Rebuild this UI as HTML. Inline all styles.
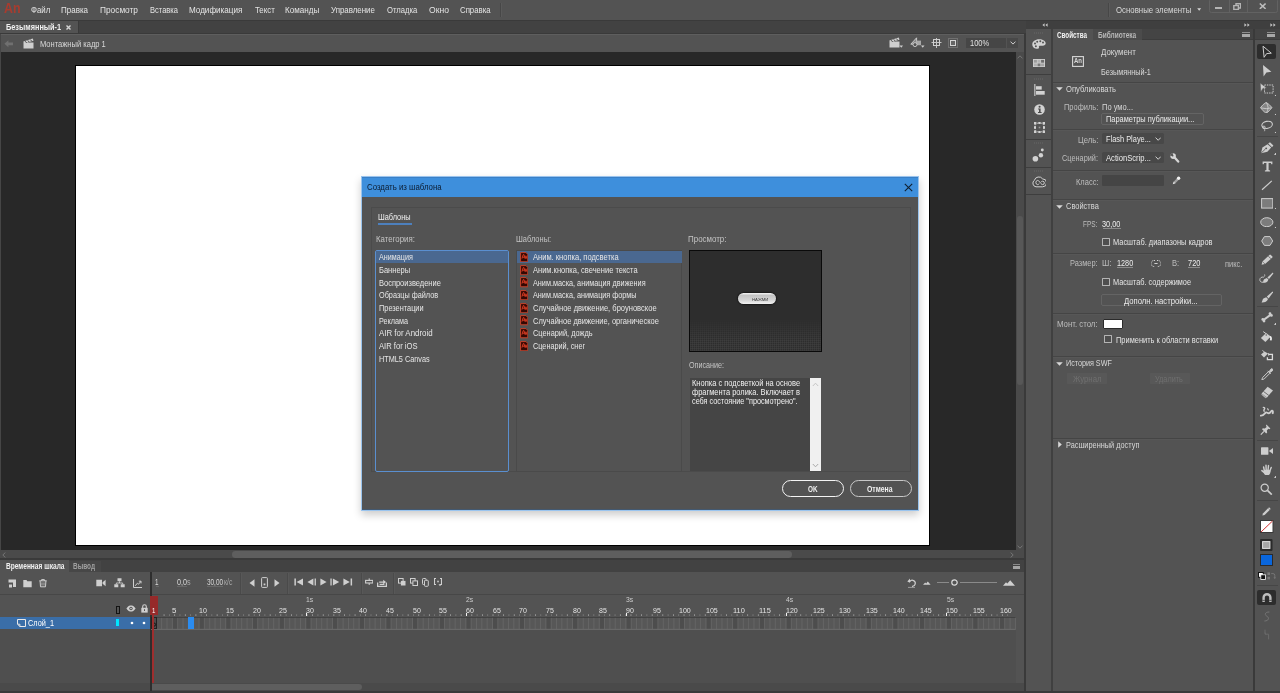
<!DOCTYPE html>
<html><head><meta charset="utf-8"><title>Adobe Animate</title><style>
html,body{margin:0;padding:0;}
body{width:1280px;height:693px;overflow:hidden;background:#535353;position:relative;font-family:"Liberation Sans",sans-serif;}
.r{position:absolute;box-sizing:border-box;display:block;}
.t{position:absolute;transform-origin:0 50%;white-space:nowrap;line-height:14px;height:14px;font-family:"Liberation Sans",sans-serif;}
</style></head><body>
<div class="r" style="left:0px;top:0px;width:1280px;height:20px;background:#535353;"></div>
<div class="t" style="left:4.1px;top:1.4px;color:#a83c2f;font-size:14.8px;font-weight:bold;transform:scaleX(0.8412);">An</div>
<div class="t" style="left:31.2px;top:3.0px;color:#e4e4e4;font-size:9px;transform:scaleX(0.8717);">Файл</div>
<div class="t" style="left:61.3px;top:3.0px;color:#e4e4e4;font-size:9px;transform:scaleX(0.8880);">Правка</div>
<div class="t" style="left:99.7px;top:3.0px;color:#e4e4e4;font-size:9px;transform:scaleX(0.9244);">Просмотр</div>
<div class="t" style="left:149.5px;top:3.0px;color:#e4e4e4;font-size:9px;transform:scaleX(0.8370);">Вставка</div>
<div class="t" style="left:189.3px;top:3.0px;color:#e4e4e4;font-size:9px;transform:scaleX(0.8984);">Модификация</div>
<div class="t" style="left:254.5px;top:3.0px;color:#e4e4e4;font-size:9px;transform:scaleX(0.8733);">Текст</div>
<div class="t" style="left:285.4px;top:3.0px;color:#e4e4e4;font-size:9px;transform:scaleX(0.8967);">Команды</div>
<div class="t" style="left:331.2px;top:3.0px;color:#e4e4e4;font-size:9px;transform:scaleX(0.8772);">Управление</div>
<div class="t" style="left:387.1px;top:3.0px;color:#e4e4e4;font-size:9px;transform:scaleX(0.8545);">Отладка</div>
<div class="t" style="left:429.1px;top:3.0px;color:#e4e4e4;font-size:9px;transform:scaleX(0.9512);">Окно</div>
<div class="t" style="left:459.7px;top:3.0px;color:#e4e4e4;font-size:9px;transform:scaleX(0.8665);">Справка</div>
<div class="r" style="left:500px;top:3px;width:1px;height:14px;background:#474747;"></div>
<div class="r" style="left:501px;top:3px;width:1px;height:14px;background:#5a5a5a;"></div>
<div class="r" style="left:1108px;top:3px;width:1px;height:14px;background:#474747;"></div>
<div class="r" style="left:1109px;top:3px;width:1px;height:14px;background:#5a5a5a;"></div>
<div class="t" style="left:1115.7px;top:2.5px;color:#d8d8d8;font-size:9px;transform:scaleX(0.8694);">Основные элементы</div>
<svg class="r" style="left:1197.2px;top:8.4px" width="4.4" height="3" viewBox="0 0 4.4 3"><path d="M0.2 0.3h4l-2 2.5z" fill="#d4d4d4"/></svg>
<div class="r" style="left:1209.3px;top:-2px;width:69px;height:14.6px;background:transparent;border:1px solid #626262;border-radius:2.5px;"></div>
<div class="r" style="left:1228.5px;top:0px;width:1px;height:12px;background:#626262;"></div>
<div class="r" style="left:1247px;top:0px;width:1px;height:12px;background:#626262;"></div>
<div class="r" style="left:1215px;top:7.1px;width:7.4px;height:2.3px;background:#b4b4b4;"></div>
<svg class="r" style="left:1233px;top:3px" width="8.4" height="7.2" viewBox="0 0 8.4 7.2"><path d="M3 0.8h4.6v4.2h-4.6z" fill="none" stroke="#b4b4b4" stroke-width="1.4"/><path d="M0.8 2.6h4.6v3.8h-4.6z" fill="#535353" stroke="#b4b4b4" stroke-width="1.4"/></svg>
<svg class="r" style="left:1258.5px;top:3px" width="7.4" height="6.4" viewBox="0 0 7.4 6.4"><path d="M0.8 0.5L6.6 5.9M6.6 0.5L0.8 5.9" stroke="#bcbcbc" stroke-width="1.5" fill="none"/></svg>
<div class="r" style="left:0px;top:20px;width:1280px;height:14px;background:#424242;"></div>
<div class="r" style="left:0px;top:20px;width:1280px;height:1px;background:#3a3a3a;"></div>
<div class="r" style="left:0px;top:33px;width:1280px;height:0.9px;background:#3a3a3a;"></div>
<div class="r" style="left:0px;top:21px;width:78px;height:12px;background:#535353;"></div>
<div class="r" style="left:78px;top:21px;width:0.8px;height:12px;background:#3a3a3a;"></div>
<div class="t" style="left:6.2px;top:20.0px;color:#f0f0f0;font-size:8.5px;font-weight:bold;transform:scaleX(0.8624);">Безымянный-1</div>
<svg class="r" style="left:66.2px;top:24.8px" width="5" height="5" viewBox="0 0 5 5"><path d="M0.5 0.5L4.5 4.5M4.5 0.5L0.5 4.5" stroke="#d4d4d4" stroke-width="1.4"/></svg>
<div class="r" style="left:0px;top:34px;width:1026px;height:18px;background:#535353;"></div>
<div class="r" style="left:0px;top:34px;width:1026px;height:1px;background:#5e5e5e;"></div>
<svg class="r" style="left:4.2px;top:40.2px" width="9.4" height="7.6" viewBox="0 0 9.4 7.6"><path d="M0.4 3.8L4.4 0.3V2.4H9V5.2H4.4V7.3z" fill="#707070"/></svg>
<svg class="r" style="left:22.8px;top:37.5px" width="11" height="11" viewBox="0 0 11 11"><path d="M0.5 4.5h10v6h-10z" fill="#d0d0d0"/><path d="M0.3 3.6L9.8 0.6l0.7 2.2L1 5.6z" fill="#d0d0d0"/><path d="M2.2 3.2l1.5 1.8M4.8 2.4l1.5 1.8M7.4 1.6l1.5 1.8" stroke="#535353" stroke-width="1"/></svg>
<div class="t" style="left:39.7px;top:36.7px;color:#d8d8d8;font-size:9px;transform:scaleX(0.8382);">Монтажный кадр 1</div>
<svg class="r" style="left:888.8px;top:36.6px" width="14" height="11" viewBox="0 0 14 11"><path d="M0.5 4.5h10v6h-10z" fill="#cfcfcf"/><path d="M0.3 3.6L9.8 0.6l0.7 2.2L1 5.6z" fill="#cfcfcf"/><path d="M2.2 3.2l1.5 1.8M4.8 2.4l1.5 1.8M7.4 1.6l1.5 1.8" stroke="#535353" stroke-width="1"/><path d="M10.5 8.5h3.5l-1.75 2.2z" fill="#cfcfcf"/></svg>
<svg class="r" style="left:910px;top:37.2px" width="15" height="11" viewBox="0 0 15 11"><path d="M0.8 7.2L6.6 0.8V7.2z" fill="#8a8a8a" stroke="#cfcfcf" stroke-width="0.9"/><rect x="6.4" y="3.6" width="4.6" height="4.6" fill="#a8a8a8"/><circle cx="5" cy="7.6" r="2" fill="#535353" stroke="#cfcfcf" stroke-width="0.9"/><path d="M11 8.5h3.5l-1.75 2.2z" fill="#cfcfcf"/></svg>
<svg class="r" style="left:931px;top:38px" width="11" height="10" viewBox="0 0 11 10"><path d="M5.5 0v10M0.5 4.5h10" stroke="#c4c4c4" stroke-width="1"/><rect x="2.5" y="1.5" width="6" height="6" fill="none" stroke="#d0d0d0" stroke-width="1"/></svg>
<svg class="r" style="left:948px;top:38px" width="10" height="10" viewBox="0 0 10 10"><rect x="0.5" y="0.5" width="9" height="9" fill="none" stroke="#8e8e8e" stroke-width="1" stroke-dasharray="1 1"/><rect x="2.5" y="2.5" width="5" height="5" fill="#666" stroke="#d4d4d4" stroke-width="1"/></svg>
<div class="r" style="left:966px;top:37.6px;width:40px;height:10.4px;background:#464646;"></div>
<div class="r" style="left:1007px;top:37.6px;width:10.5px;height:10.4px;background:#484848;"></div>
<div class="t" style="left:970.1px;top:36.2px;color:#e0e0e0;font-size:8.5px;transform:scaleX(0.8828);">100%</div>
<svg class="r" style="left:1009.6px;top:41.4px" width="6" height="4" viewBox="0 0 6 4"><path d="M0.5 0.6L3 3.1L5.5 0.6" fill="none" stroke="#d0d0d0" stroke-width="1"/></svg>
<div class="r" style="left:0px;top:52px;width:1016px;height:498px;background:#282828;"></div>
<div class="r" style="left:0px;top:34px;width:1px;height:516px;background:#464646;"></div>
<div class="r" style="left:75px;top:65px;width:855px;height:481px;background:#000000;"></div>
<div class="r" style="left:76px;top:66px;width:853px;height:479px;background:#ffffff;"></div>
<div class="r" style="left:1016px;top:52px;width:8px;height:498px;background:#4a4a4a;"></div>
<svg class="r" style="left:1017.2px;top:54.6px" width="6" height="4" viewBox="0 0 6 4"><path d="M0.5 3.4L3 0.8L5.5 3.4" fill="none" stroke="#7a7a7a" stroke-width="0.9"/></svg>
<svg class="r" style="left:1017.2px;top:544.6px" width="6" height="4" viewBox="0 0 6 4"><path d="M0.5 0.6L3 3.2L5.5 0.6" fill="none" stroke="#7a7a7a" stroke-width="0.9"/></svg>
<div class="r" style="left:1017px;top:216px;width:6px;height:169px;background:#575757;border-radius:3px;"></div>
<div class="r" style="left:1024px;top:34px;width:2px;height:659px;background:#3a3a3a;"></div>
<div class="r" style="left:0px;top:550px;width:1024px;height:8.5px;background:#4a4a4a;"></div>
<svg class="r" style="left:2.4px;top:551.6px" width="4" height="6" viewBox="0 0 4 6"><path d="M3.4 0.5L0.8 3L3.4 5.5" fill="none" stroke="#7a7a7a" stroke-width="0.9"/></svg>
<svg class="r" style="left:1010.4px;top:551.6px" width="4" height="6" viewBox="0 0 4 6"><path d="M0.6 0.5L3.2 3L0.6 5.5" fill="none" stroke="#7a7a7a" stroke-width="0.9"/></svg>
<div class="r" style="left:232px;top:551px;width:560px;height:6.8px;background:#5e5e5e;border-radius:3.4px;"></div>
<div class="r" style="left:0px;top:558.4px;width:1024px;height:1.6px;background:#3a3a3a;"></div>
<div class="r" style="left:0px;top:560px;width:1024px;height:11.5px;background:#424242;"></div>
<div class="r" style="left:0px;top:560px;width:68.5px;height:12px;background:#535353;"></div>
<div class="t" style="left:5.5px;top:559.3px;color:#f0f0f0;font-size:8.5px;font-weight:bold;transform:scaleX(0.7750);">Временная шкала</div>
<div class="r" style="left:69px;top:560.5px;width:31.5px;height:11.5px;background:#474747;"></div>
<div class="t" style="left:73.1px;top:559.3px;color:#a0a0a0;font-size:8.5px;font-weight:bold;transform:scaleX(0.7586);">Вывод</div>
<div class="r" style="left:1013px;top:563.8px;width:7px;height:1.2px;background:#8a8a8a;"></div>
<div class="r" style="left:1013px;top:566px;width:7px;height:3px;background:#a4a4a4;"></div>
<div class="r" style="left:0px;top:572px;width:1024px;height:23px;background:#535353;"></div>
<div class="r" style="left:0px;top:593.8px;width:1024px;height:1px;background:#474747;"></div>
<svg class="r" style="left:8px;top:579px" width="9" height="9" viewBox="0 0 9 9"><path d="M0.5 0.5h7.5v7.5h-3v-4.5h-4.5z" fill="#cfcfcf"/><path d="M1 5.5h3v3h-3z" fill="#cfcfcf"/></svg>
<svg class="r" style="left:23px;top:579px" width="9" height="9" viewBox="0 0 9 9"><path d="M0.3 1h3.2l0.8 1.2h4.4v6h-8.4z" fill="#cfcfcf"/></svg>
<svg class="r" style="left:39px;top:579px" width="8" height="8.5" viewBox="0 0 8 8.5"><path d="M0.3 1.8h7.4M2.6 1.8V0.6h2.8V1.8M1.1 2l0.4 5.8h5l0.4-5.8" fill="none" stroke="#cfcfcf" stroke-width="1"/><path d="M3 3.4v3.2M5 3.4v3.2" stroke="#cfcfcf" stroke-width="0.8"/></svg>
<svg class="r" style="left:96px;top:579px" width="10" height="8" viewBox="0 0 10 8"><path d="M0.3 0.8h5.7v6.4h-5.7z M6.6 3.2L9.6 0.8v6.4L6.6 4.8z" fill="#cfcfcf"/></svg>
<svg class="r" style="left:114px;top:578px" width="11" height="10" viewBox="0 0 11 10"><path d="M3.5 0.3h4v3h-4z M0.3 6.3h4v3h-4z M6.7 6.3h4v3h-4z" fill="#cfcfcf"/><path d="M5.5 3.3v1.7M2.3 6.3V5h6.4v1.3" fill="none" stroke="#cfcfcf" stroke-width="0.9"/></svg>
<svg class="r" style="left:133px;top:579px" width="9" height="9" viewBox="0 0 9 9"><path d="M0.5 0v8.5H9" fill="none" stroke="#cfcfcf" stroke-width="1"/><path d="M2.2 6.8L4.4 4.2L5.6 5.2L7.8 2.4M8 2.2h-2.2M8 2.2v2.2" fill="none" stroke="#cfcfcf" stroke-width="1"/></svg>
<div class="r" style="left:150.3px;top:572px;width:1.7px;height:121px;background:#2e2e2e;"></div>
<div class="t" style="left:155.3px;top:574.5px;color:#d8d8d8;font-size:8.5px;transform:scaleX(0.7393);">1</div>
<div class="r" style="left:155.5px;top:585.6px;width:3px;height:0.7px;background:#686868;"></div>
<div class="t" style="left:176.6px;top:574.5px;color:#d8d8d8;font-size:8.5px;transform:scaleX(0.8454);">0,0</div>
<div class="t" style="left:187.3px;top:574.6px;color:#a8a8a8;font-size:8.5px;transform:scaleX(0.8471);">s</div>
<div class="r" style="left:177px;top:585.6px;width:9.5px;height:0.7px;background:#686868;"></div>
<div class="t" style="left:206.6px;top:574.5px;color:#d8d8d8;font-size:8.5px;transform:scaleX(0.7518);">30,00</div>
<div class="t" style="left:223.5px;top:574.6px;color:#a8a8a8;font-size:8.5px;transform:scaleX(0.8024);">к/с</div>
<div class="r" style="left:207px;top:585.6px;width:15.5px;height:0.7px;background:#686868;"></div>
<div class="r" style="left:239.5px;top:573px;width:1px;height:20.5px;background:#4a4a4a;"></div>
<div class="r" style="left:240.5px;top:573px;width:1px;height:20.5px;background:#585858;"></div>
<div class="r" style="left:286.5px;top:573px;width:1px;height:20.5px;background:#4a4a4a;"></div>
<div class="r" style="left:287.5px;top:573px;width:1px;height:20.5px;background:#585858;"></div>
<div class="r" style="left:360.5px;top:573px;width:1px;height:20.5px;background:#4a4a4a;"></div>
<div class="r" style="left:361.5px;top:573px;width:1px;height:20.5px;background:#585858;"></div>
<div class="r" style="left:393px;top:573px;width:1px;height:20.5px;background:#4a4a4a;"></div>
<div class="r" style="left:394px;top:573px;width:1px;height:20.5px;background:#585858;"></div>
<svg class="r" style="left:249px;top:578.5px" width="6" height="8" viewBox="0 0 6 8"><path d="M5.5 0.3v7.4L0.5 4z" fill="#cfcfcf"/></svg>
<svg class="r" style="left:260.5px;top:577px" width="7" height="11" viewBox="0 0 7 11"><rect x="0.6" y="0.6" width="5.8" height="9.8" rx="0.8" fill="none" stroke="#cfcfcf" stroke-width="1"/><rect x="2.6" y="6.5" width="1.8" height="1.8" fill="#cfcfcf"/></svg>
<svg class="r" style="left:273.5px;top:578.5px" width="6" height="8" viewBox="0 0 6 8"><path d="M0.5 0.3v7.4L5.5 4z" fill="#cfcfcf"/></svg>
<svg class="r" style="left:294px;top:578px" width="10" height="8" viewBox="0 0 10 8"><path d="M0.4 0.4h1.5v7.2h-1.5z M9 0.4v7.2L2.6 4z" fill="#cfcfcf"/></svg>
<svg class="r" style="left:306.5px;top:578px" width="10" height="8" viewBox="0 0 10 8"><path d="M7.6 0.4h1.3v7.2h-1.3z M6.4 0.4v7.2L0.4 4z" fill="#cfcfcf"/></svg>
<svg class="r" style="left:319.5px;top:578px" width="7" height="8" viewBox="0 0 7 8"><path d="M0.4 0.4v7.2L6.6 4z" fill="#cfcfcf"/></svg>
<svg class="r" style="left:330px;top:578px" width="10" height="8" viewBox="0 0 10 8"><path d="M0.4 0.4h1.3v7.2h-1.3z M2.9 0.4v7.2L9.2 4z" fill="#cfcfcf"/></svg>
<svg class="r" style="left:342.5px;top:578px" width="10" height="8" viewBox="0 0 10 8"><path d="M7.6 0.4h1.5v7.2h-1.5z M0.4 0.4v7.2L6.8 4z" fill="#cfcfcf"/></svg>
<svg class="r" style="left:365px;top:577.8px" width="8.4" height="7.4" viewBox="0 0 8.4 7.4"><path d="M4.2 0.4v6.6" stroke="#cfcfcf" stroke-width="1"/><rect x="0.6" y="2.4" width="7.2" height="2.6" fill="#535353" stroke="#cfcfcf" stroke-width="1.1"/></svg>
<svg class="r" style="left:376.5px;top:578.5px" width="10" height="8" viewBox="0 0 10 8"><path d="M0.6 3.4v4h8.8v-4M2.6 5.4h4.8" fill="none" stroke="#cfcfcf" stroke-width="1.3"/><path d="M2.2 3.5V2.6h4V0.8l2.8 2.3-2.8 2.3V3.8H2.2z" fill="#cfcfcf"/></svg>
<svg class="r" style="left:398px;top:578px" width="8" height="8" viewBox="0 0 8 8"><rect x="0.5" y="0.5" width="4.6" height="4.6" fill="none" stroke="#cfcfcf" stroke-width="1"/><rect x="2.9" y="2.9" width="4.6" height="4.6" fill="#cfcfcf"/></svg>
<svg class="r" style="left:410px;top:578px" width="8" height="8" viewBox="0 0 8 8"><rect x="0.5" y="0.5" width="4.6" height="4.6" fill="none" stroke="#cfcfcf" stroke-width="1"/><rect x="2.9" y="2.9" width="4.6" height="4.6" fill="#535353" stroke="#cfcfcf" stroke-width="1"/></svg>
<svg class="r" style="left:422px;top:578px" width="7" height="9" viewBox="0 0 7 9"><rect x="0.5" y="0.5" width="3.6" height="6" rx="0.8" fill="none" stroke="#cfcfcf" stroke-width="1"/><rect x="2.5" y="2.3" width="3.8" height="6" rx="0.8" fill="#535353" stroke="#cfcfcf" stroke-width="1"/></svg>
<svg class="r" style="left:433.5px;top:578px" width="8" height="9" viewBox="0 0 8 9"><path d="M2 0.5H0.5V6.5H2M6 0.5H7.5V6.5H6" fill="none" stroke="#cfcfcf" stroke-width="1.1"/><rect x="3.2" y="2.7" width="1.6" height="1.6" fill="#cfcfcf"/><path d="M4.5 6.2h3l-1.5 2z" fill="#cfcfcf"/></svg>
<svg class="r" style="left:906.5px;top:577.5px" width="10" height="10" viewBox="0 0 10 10"><path d="M2.8 3.6A3 3 0 1 1 5 8.3" fill="none" stroke="#cfcfcf" stroke-width="1.2"/><path d="M0.3 3.4L3 0.6v4.2z" fill="#cfcfcf"/><path d="M1 9.4h7" stroke="#9a9a9a" stroke-width="1"/></svg>
<svg class="r" style="left:922.5px;top:581px" width="8" height="4" viewBox="0 0 8 4"><path d="M0 3.7L2.2 1.6L3.2 2.5L4.8 0.4L7.6 3.7z" fill="#cfcfcf"/></svg>
<div class="r" style="left:937px;top:582px;width:11.5px;height:1px;background:#8a8a8a;"></div>
<div class="r" style="left:959.5px;top:582px;width:37px;height:1px;background:#8a8a8a;"></div>
<svg class="r" style="left:950.5px;top:579px" width="7" height="7" viewBox="0 0 7 7"><circle cx="3.5" cy="3.5" r="2.7" fill="#535353" stroke="#dcdcdc" stroke-width="1.2"/></svg>
<svg class="r" style="left:1002.5px;top:579.5px" width="13" height="6" viewBox="0 0 13 6"><path d="M0 5.7L3 2.2L4.3 3.6L7.2 0.3L12 5.7z" fill="#cfcfcf"/></svg>
<div class="r" style="left:0px;top:595px;width:150px;height:22px;background:#535353;"></div>
<div class="r" style="left:152px;top:595px;width:872px;height:22px;background:#535353;"></div>
<svg class="r" style="left:116px;top:605.5px" width="4" height="8" viewBox="0 0 4 8"><rect x="0.5" y="0.5" width="3" height="7" fill="none" stroke="#141414" stroke-width="1"/></svg>
<svg class="r" style="left:126px;top:604.5px" width="10" height="7" viewBox="0 0 10 7"><path d="M0.4 3.5C2 0.9 3.6 0.4 5 0.4S8 0.9 9.6 3.5C8 6.1 6.4 6.6 5 6.6S2 6.1 0.4 3.5z" fill="#cfcfcf"/><circle cx="5" cy="3.5" r="1.7" fill="#535353"/><circle cx="5" cy="3.5" r="0.8" fill="#cfcfcf"/></svg>
<svg class="r" style="left:140.5px;top:603.8px" width="7" height="9" viewBox="0 0 7 9"><path d="M1.7 4V2.6a1.8 1.8 0 0 1 3.6 0V4" fill="none" stroke="#cfcfcf" stroke-width="1.1"/><rect x="0.3" y="3.8" width="6.4" height="4.8" fill="#cfcfcf"/><rect x="3" y="5.2" width="1" height="1.8" fill="#535353"/></svg>
<div class="r" style="left:0px;top:617px;width:150px;height:12px;background:#3a6ea8;"></div>
<svg class="r" style="left:17px;top:619.3px" width="9" height="8" viewBox="0 0 9 8"><path d="M0.5 0.5h8v7h-5.6L0.5 5.2z" fill="none" stroke="#e8e8e8" stroke-width="1"/><path d="M0.5 5.2h2.4v2.3" fill="none" stroke="#e8e8e8" stroke-width="0.9"/></svg>
<div class="t" style="left:28.3px;top:616.2px;color:#ffffff;font-size:9px;transform:scaleX(0.8149);">Слой_1</div>
<div class="r" style="left:115.8px;top:619px;width:3.6px;height:7.4px;background:#00e4ff;"></div>
<svg class="r" style="left:129.5px;top:621px" width="4" height="4" viewBox="0 0 4 4"><circle cx="2" cy="2" r="1.35" fill="#fff"/></svg>
<svg class="r" style="left:142px;top:621px" width="4" height="4" viewBox="0 0 4 4"><circle cx="2" cy="2" r="1.35" fill="#fff"/></svg>
<div class="r" style="left:0px;top:629px;width:150px;height:54px;background:#4f4f4f;"></div>
<div class="r" style="left:152px;top:629px;width:864px;height:54px;background:#4f4f4f;"></div>
<div class="r" style="left:1016px;top:595px;width:8px;height:98px;background:#535353;"></div>
<svg class="r" style="left:151.3px;top:616.8px" width="864.7" height="13" viewBox="0 0 864.7 13"><rect x="0" y="0" width="864.7" height="13" fill="#575757"/><rect x="-0.45" y="0" width="0.9" height="12" fill="#666666"/><rect x="4.89" y="0" width="0.9" height="12" fill="#666666"/><rect x="10.22" y="0" width="0.9" height="12" fill="#666666"/><rect x="15.56" y="0" width="0.9" height="12" fill="#666666"/><rect x="21.84" y="0" width="4.84" height="12" fill="#4d4d4d"/><rect x="20.89" y="0" width="0.9" height="12" fill="#666666"/><rect x="26.23" y="0" width="0.9" height="12" fill="#666666"/><rect x="31.57" y="0" width="0.9" height="12" fill="#666666"/><rect x="36.90" y="0" width="0.9" height="12" fill="#666666"/><rect x="42.24" y="0" width="0.9" height="12" fill="#666666"/><rect x="48.52" y="0" width="4.84" height="12" fill="#4d4d4d"/><rect x="47.57" y="0" width="0.9" height="12" fill="#666666"/><rect x="52.91" y="0" width="0.9" height="12" fill="#666666"/><rect x="58.25" y="0" width="0.9" height="12" fill="#666666"/><rect x="63.58" y="0" width="0.9" height="12" fill="#666666"/><rect x="68.92" y="0" width="0.9" height="12" fill="#666666"/><rect x="75.20" y="0" width="4.84" height="12" fill="#4d4d4d"/><rect x="74.25" y="0" width="0.9" height="12" fill="#666666"/><rect x="79.59" y="0" width="0.9" height="12" fill="#666666"/><rect x="84.93" y="0" width="0.9" height="12" fill="#666666"/><rect x="90.26" y="0" width="0.9" height="12" fill="#666666"/><rect x="95.60" y="0" width="0.9" height="12" fill="#666666"/><rect x="101.88" y="0" width="4.84" height="12" fill="#4d4d4d"/><rect x="100.93" y="0" width="0.9" height="12" fill="#666666"/><rect x="106.27" y="0" width="0.9" height="12" fill="#666666"/><rect x="111.61" y="0" width="0.9" height="12" fill="#666666"/><rect x="116.94" y="0" width="0.9" height="12" fill="#666666"/><rect x="122.28" y="0" width="0.9" height="12" fill="#666666"/><rect x="128.56" y="0" width="4.84" height="12" fill="#4d4d4d"/><rect x="127.61" y="0" width="0.9" height="12" fill="#666666"/><rect x="132.95" y="0" width="0.9" height="12" fill="#666666"/><rect x="138.29" y="0" width="0.9" height="12" fill="#666666"/><rect x="143.62" y="0" width="0.9" height="12" fill="#666666"/><rect x="148.96" y="0" width="0.9" height="12" fill="#666666"/><rect x="155.24" y="0" width="4.84" height="12" fill="#4d4d4d"/><rect x="154.29" y="0" width="0.9" height="12" fill="#666666"/><rect x="159.63" y="0" width="0.9" height="12" fill="#666666"/><rect x="164.97" y="0" width="0.9" height="12" fill="#666666"/><rect x="170.30" y="0" width="0.9" height="12" fill="#666666"/><rect x="175.64" y="0" width="0.9" height="12" fill="#666666"/><rect x="181.92" y="0" width="4.84" height="12" fill="#4d4d4d"/><rect x="180.97" y="0" width="0.9" height="12" fill="#666666"/><rect x="186.31" y="0" width="0.9" height="12" fill="#666666"/><rect x="191.65" y="0" width="0.9" height="12" fill="#666666"/><rect x="196.98" y="0" width="0.9" height="12" fill="#666666"/><rect x="202.32" y="0" width="0.9" height="12" fill="#666666"/><rect x="208.60" y="0" width="4.84" height="12" fill="#4d4d4d"/><rect x="207.65" y="0" width="0.9" height="12" fill="#666666"/><rect x="212.99" y="0" width="0.9" height="12" fill="#666666"/><rect x="218.33" y="0" width="0.9" height="12" fill="#666666"/><rect x="223.66" y="0" width="0.9" height="12" fill="#666666"/><rect x="229.00" y="0" width="0.9" height="12" fill="#666666"/><rect x="235.28" y="0" width="4.84" height="12" fill="#4d4d4d"/><rect x="234.33" y="0" width="0.9" height="12" fill="#666666"/><rect x="239.67" y="0" width="0.9" height="12" fill="#666666"/><rect x="245.01" y="0" width="0.9" height="12" fill="#666666"/><rect x="250.34" y="0" width="0.9" height="12" fill="#666666"/><rect x="255.68" y="0" width="0.9" height="12" fill="#666666"/><rect x="261.96" y="0" width="4.84" height="12" fill="#4d4d4d"/><rect x="261.01" y="0" width="0.9" height="12" fill="#666666"/><rect x="266.35" y="0" width="0.9" height="12" fill="#666666"/><rect x="271.69" y="0" width="0.9" height="12" fill="#666666"/><rect x="277.02" y="0" width="0.9" height="12" fill="#666666"/><rect x="282.36" y="0" width="0.9" height="12" fill="#666666"/><rect x="288.64" y="0" width="4.84" height="12" fill="#4d4d4d"/><rect x="287.69" y="0" width="0.9" height="12" fill="#666666"/><rect x="293.03" y="0" width="0.9" height="12" fill="#666666"/><rect x="298.37" y="0" width="0.9" height="12" fill="#666666"/><rect x="303.70" y="0" width="0.9" height="12" fill="#666666"/><rect x="309.04" y="0" width="0.9" height="12" fill="#666666"/><rect x="315.32" y="0" width="4.84" height="12" fill="#4d4d4d"/><rect x="314.37" y="0" width="0.9" height="12" fill="#666666"/><rect x="319.71" y="0" width="0.9" height="12" fill="#666666"/><rect x="325.05" y="0" width="0.9" height="12" fill="#666666"/><rect x="330.38" y="0" width="0.9" height="12" fill="#666666"/><rect x="335.72" y="0" width="0.9" height="12" fill="#666666"/><rect x="342.00" y="0" width="4.84" height="12" fill="#4d4d4d"/><rect x="341.05" y="0" width="0.9" height="12" fill="#666666"/><rect x="346.39" y="0" width="0.9" height="12" fill="#666666"/><rect x="351.73" y="0" width="0.9" height="12" fill="#666666"/><rect x="357.06" y="0" width="0.9" height="12" fill="#666666"/><rect x="362.40" y="0" width="0.9" height="12" fill="#666666"/><rect x="368.68" y="0" width="4.84" height="12" fill="#4d4d4d"/><rect x="367.73" y="0" width="0.9" height="12" fill="#666666"/><rect x="373.07" y="0" width="0.9" height="12" fill="#666666"/><rect x="378.41" y="0" width="0.9" height="12" fill="#666666"/><rect x="383.74" y="0" width="0.9" height="12" fill="#666666"/><rect x="389.08" y="0" width="0.9" height="12" fill="#666666"/><rect x="395.36" y="0" width="4.84" height="12" fill="#4d4d4d"/><rect x="394.41" y="0" width="0.9" height="12" fill="#666666"/><rect x="399.75" y="0" width="0.9" height="12" fill="#666666"/><rect x="405.09" y="0" width="0.9" height="12" fill="#666666"/><rect x="410.42" y="0" width="0.9" height="12" fill="#666666"/><rect x="415.76" y="0" width="0.9" height="12" fill="#666666"/><rect x="422.04" y="0" width="4.84" height="12" fill="#4d4d4d"/><rect x="421.09" y="0" width="0.9" height="12" fill="#666666"/><rect x="426.43" y="0" width="0.9" height="12" fill="#666666"/><rect x="431.77" y="0" width="0.9" height="12" fill="#666666"/><rect x="437.10" y="0" width="0.9" height="12" fill="#666666"/><rect x="442.44" y="0" width="0.9" height="12" fill="#666666"/><rect x="448.72" y="0" width="4.84" height="12" fill="#4d4d4d"/><rect x="447.77" y="0" width="0.9" height="12" fill="#666666"/><rect x="453.11" y="0" width="0.9" height="12" fill="#666666"/><rect x="458.45" y="0" width="0.9" height="12" fill="#666666"/><rect x="463.78" y="0" width="0.9" height="12" fill="#666666"/><rect x="469.12" y="0" width="0.9" height="12" fill="#666666"/><rect x="475.40" y="0" width="4.84" height="12" fill="#4d4d4d"/><rect x="474.45" y="0" width="0.9" height="12" fill="#666666"/><rect x="479.79" y="0" width="0.9" height="12" fill="#666666"/><rect x="485.13" y="0" width="0.9" height="12" fill="#666666"/><rect x="490.46" y="0" width="0.9" height="12" fill="#666666"/><rect x="495.80" y="0" width="0.9" height="12" fill="#666666"/><rect x="502.08" y="0" width="4.84" height="12" fill="#4d4d4d"/><rect x="501.13" y="0" width="0.9" height="12" fill="#666666"/><rect x="506.47" y="0" width="0.9" height="12" fill="#666666"/><rect x="511.81" y="0" width="0.9" height="12" fill="#666666"/><rect x="517.14" y="0" width="0.9" height="12" fill="#666666"/><rect x="522.48" y="0" width="0.9" height="12" fill="#666666"/><rect x="528.76" y="0" width="4.84" height="12" fill="#4d4d4d"/><rect x="527.81" y="0" width="0.9" height="12" fill="#666666"/><rect x="533.15" y="0" width="0.9" height="12" fill="#666666"/><rect x="538.49" y="0" width="0.9" height="12" fill="#666666"/><rect x="543.82" y="0" width="0.9" height="12" fill="#666666"/><rect x="549.16" y="0" width="0.9" height="12" fill="#666666"/><rect x="555.44" y="0" width="4.84" height="12" fill="#4d4d4d"/><rect x="554.49" y="0" width="0.9" height="12" fill="#666666"/><rect x="559.83" y="0" width="0.9" height="12" fill="#666666"/><rect x="565.17" y="0" width="0.9" height="12" fill="#666666"/><rect x="570.50" y="0" width="0.9" height="12" fill="#666666"/><rect x="575.84" y="0" width="0.9" height="12" fill="#666666"/><rect x="582.12" y="0" width="4.84" height="12" fill="#4d4d4d"/><rect x="581.17" y="0" width="0.9" height="12" fill="#666666"/><rect x="586.51" y="0" width="0.9" height="12" fill="#666666"/><rect x="591.85" y="0" width="0.9" height="12" fill="#666666"/><rect x="597.18" y="0" width="0.9" height="12" fill="#666666"/><rect x="602.52" y="0" width="0.9" height="12" fill="#666666"/><rect x="608.80" y="0" width="4.84" height="12" fill="#4d4d4d"/><rect x="607.85" y="0" width="0.9" height="12" fill="#666666"/><rect x="613.19" y="0" width="0.9" height="12" fill="#666666"/><rect x="618.53" y="0" width="0.9" height="12" fill="#666666"/><rect x="623.86" y="0" width="0.9" height="12" fill="#666666"/><rect x="629.20" y="0" width="0.9" height="12" fill="#666666"/><rect x="635.48" y="0" width="4.84" height="12" fill="#4d4d4d"/><rect x="634.53" y="0" width="0.9" height="12" fill="#666666"/><rect x="639.87" y="0" width="0.9" height="12" fill="#666666"/><rect x="645.21" y="0" width="0.9" height="12" fill="#666666"/><rect x="650.54" y="0" width="0.9" height="12" fill="#666666"/><rect x="655.88" y="0" width="0.9" height="12" fill="#666666"/><rect x="662.16" y="0" width="4.84" height="12" fill="#4d4d4d"/><rect x="661.21" y="0" width="0.9" height="12" fill="#666666"/><rect x="666.55" y="0" width="0.9" height="12" fill="#666666"/><rect x="671.89" y="0" width="0.9" height="12" fill="#666666"/><rect x="677.22" y="0" width="0.9" height="12" fill="#666666"/><rect x="682.56" y="0" width="0.9" height="12" fill="#666666"/><rect x="688.84" y="0" width="4.84" height="12" fill="#4d4d4d"/><rect x="687.89" y="0" width="0.9" height="12" fill="#666666"/><rect x="693.23" y="0" width="0.9" height="12" fill="#666666"/><rect x="698.57" y="0" width="0.9" height="12" fill="#666666"/><rect x="703.90" y="0" width="0.9" height="12" fill="#666666"/><rect x="709.24" y="0" width="0.9" height="12" fill="#666666"/><rect x="715.52" y="0" width="4.84" height="12" fill="#4d4d4d"/><rect x="714.57" y="0" width="0.9" height="12" fill="#666666"/><rect x="719.91" y="0" width="0.9" height="12" fill="#666666"/><rect x="725.25" y="0" width="0.9" height="12" fill="#666666"/><rect x="730.58" y="0" width="0.9" height="12" fill="#666666"/><rect x="735.92" y="0" width="0.9" height="12" fill="#666666"/><rect x="742.20" y="0" width="4.84" height="12" fill="#4d4d4d"/><rect x="741.25" y="0" width="0.9" height="12" fill="#666666"/><rect x="746.59" y="0" width="0.9" height="12" fill="#666666"/><rect x="751.93" y="0" width="0.9" height="12" fill="#666666"/><rect x="757.26" y="0" width="0.9" height="12" fill="#666666"/><rect x="762.60" y="0" width="0.9" height="12" fill="#666666"/><rect x="768.88" y="0" width="4.84" height="12" fill="#4d4d4d"/><rect x="767.93" y="0" width="0.9" height="12" fill="#666666"/><rect x="773.27" y="0" width="0.9" height="12" fill="#666666"/><rect x="778.61" y="0" width="0.9" height="12" fill="#666666"/><rect x="783.94" y="0" width="0.9" height="12" fill="#666666"/><rect x="789.28" y="0" width="0.9" height="12" fill="#666666"/><rect x="795.56" y="0" width="4.84" height="12" fill="#4d4d4d"/><rect x="794.61" y="0" width="0.9" height="12" fill="#666666"/><rect x="799.95" y="0" width="0.9" height="12" fill="#666666"/><rect x="805.29" y="0" width="0.9" height="12" fill="#666666"/><rect x="810.62" y="0" width="0.9" height="12" fill="#666666"/><rect x="815.96" y="0" width="0.9" height="12" fill="#666666"/><rect x="822.24" y="0" width="4.84" height="12" fill="#4d4d4d"/><rect x="821.29" y="0" width="0.9" height="12" fill="#666666"/><rect x="826.63" y="0" width="0.9" height="12" fill="#666666"/><rect x="831.97" y="0" width="0.9" height="12" fill="#666666"/><rect x="837.30" y="0" width="0.9" height="12" fill="#666666"/><rect x="842.64" y="0" width="0.9" height="12" fill="#666666"/><rect x="848.92" y="0" width="4.84" height="12" fill="#4d4d4d"/><rect x="847.97" y="0" width="0.9" height="12" fill="#666666"/><rect x="853.31" y="0" width="0.9" height="12" fill="#666666"/><rect x="858.65" y="0" width="0.9" height="12" fill="#666666"/><rect x="863.98" y="0" width="0.9" height="12" fill="#666666"/><rect x="0" y="0" width="864.7" height="0.8" fill="#3e3e3e"/><rect x="0" y="11.8" width="864.7" height="1.2" fill="#686868"/></svg>
<div class="r" style="left:188.252px;top:617.2px;width:6.136px;height:12px;background:#2b8cf0;"></div>
<svg class="r" style="left:151.3px;top:617px" width="6" height="12" viewBox="0 0 6 12"><rect x="0.5" y="0.5" width="5" height="11" fill="#4c4c4c" stroke="#222" stroke-width="1"/><circle cx="3" cy="7.6" r="1.6" fill="none" stroke="#111" stroke-width="0.9"/></svg>
<svg class="r" style="left:151.3px;top:613.6px" width="864.7" height="2.2" viewBox="0 0 864.7 2.2"><rect x="10.27" y="0.2" width="0.8" height="2" fill="#a2a2a2"/><rect x="15.61" y="0.2" width="0.8" height="2" fill="#7e7e7e"/><rect x="20.94" y="0.2" width="0.8" height="2" fill="#a2a2a2"/><rect x="26.28" y="0.2" width="0.8" height="2" fill="#7e7e7e"/><rect x="31.62" y="0.2" width="0.8" height="2" fill="#a2a2a2"/><rect x="36.95" y="0.2" width="0.8" height="2" fill="#7e7e7e"/><rect x="42.29" y="0.2" width="0.8" height="2" fill="#a2a2a2"/><rect x="47.62" y="0.2" width="0.8" height="2" fill="#7e7e7e"/><rect x="52.96" y="0.2" width="0.8" height="2" fill="#a2a2a2"/><rect x="58.30" y="0.2" width="0.8" height="2" fill="#7e7e7e"/><rect x="63.63" y="0.2" width="0.8" height="2" fill="#a2a2a2"/><rect x="68.97" y="0.2" width="0.8" height="2" fill="#7e7e7e"/><rect x="74.30" y="0.2" width="0.8" height="2" fill="#a2a2a2"/><rect x="79.64" y="0.2" width="0.8" height="2" fill="#7e7e7e"/><rect x="84.98" y="0.2" width="0.8" height="2" fill="#a2a2a2"/><rect x="90.31" y="0.2" width="0.8" height="2" fill="#7e7e7e"/><rect x="95.65" y="0.2" width="0.8" height="2" fill="#a2a2a2"/><rect x="100.98" y="0.2" width="0.8" height="2" fill="#7e7e7e"/><rect x="106.32" y="0.2" width="0.8" height="2" fill="#a2a2a2"/><rect x="111.66" y="0.2" width="0.8" height="2" fill="#7e7e7e"/><rect x="116.99" y="0.2" width="0.8" height="2" fill="#a2a2a2"/><rect x="122.33" y="0.2" width="0.8" height="2" fill="#7e7e7e"/><rect x="127.66" y="0.2" width="0.8" height="2" fill="#a2a2a2"/><rect x="133.00" y="0.2" width="0.8" height="2" fill="#7e7e7e"/><rect x="138.34" y="0.2" width="0.8" height="2" fill="#a2a2a2"/><rect x="143.67" y="0.2" width="0.8" height="2" fill="#7e7e7e"/><rect x="149.01" y="0.2" width="0.8" height="2" fill="#a2a2a2"/><rect x="154.34" y="0.2" width="0.8" height="2" fill="#7e7e7e"/><rect x="159.68" y="0.2" width="0.8" height="2" fill="#a2a2a2"/><rect x="165.02" y="0.2" width="0.8" height="2" fill="#7e7e7e"/><rect x="170.35" y="0.2" width="0.8" height="2" fill="#a2a2a2"/><rect x="175.69" y="0.2" width="0.8" height="2" fill="#7e7e7e"/><rect x="181.02" y="0.2" width="0.8" height="2" fill="#a2a2a2"/><rect x="186.36" y="0.2" width="0.8" height="2" fill="#7e7e7e"/><rect x="191.70" y="0.2" width="0.8" height="2" fill="#a2a2a2"/><rect x="197.03" y="0.2" width="0.8" height="2" fill="#7e7e7e"/><rect x="202.37" y="0.2" width="0.8" height="2" fill="#a2a2a2"/><rect x="207.70" y="0.2" width="0.8" height="2" fill="#7e7e7e"/><rect x="213.04" y="0.2" width="0.8" height="2" fill="#a2a2a2"/><rect x="218.38" y="0.2" width="0.8" height="2" fill="#7e7e7e"/><rect x="223.71" y="0.2" width="0.8" height="2" fill="#a2a2a2"/><rect x="229.05" y="0.2" width="0.8" height="2" fill="#7e7e7e"/><rect x="234.38" y="0.2" width="0.8" height="2" fill="#a2a2a2"/><rect x="239.72" y="0.2" width="0.8" height="2" fill="#7e7e7e"/><rect x="245.06" y="0.2" width="0.8" height="2" fill="#a2a2a2"/><rect x="250.39" y="0.2" width="0.8" height="2" fill="#7e7e7e"/><rect x="255.73" y="0.2" width="0.8" height="2" fill="#a2a2a2"/><rect x="261.06" y="0.2" width="0.8" height="2" fill="#7e7e7e"/><rect x="266.40" y="0.2" width="0.8" height="2" fill="#a2a2a2"/><rect x="271.74" y="0.2" width="0.8" height="2" fill="#7e7e7e"/><rect x="277.07" y="0.2" width="0.8" height="2" fill="#a2a2a2"/><rect x="282.41" y="0.2" width="0.8" height="2" fill="#7e7e7e"/><rect x="287.74" y="0.2" width="0.8" height="2" fill="#a2a2a2"/><rect x="293.08" y="0.2" width="0.8" height="2" fill="#7e7e7e"/><rect x="298.42" y="0.2" width="0.8" height="2" fill="#a2a2a2"/><rect x="303.75" y="0.2" width="0.8" height="2" fill="#7e7e7e"/><rect x="309.09" y="0.2" width="0.8" height="2" fill="#a2a2a2"/><rect x="314.42" y="0.2" width="0.8" height="2" fill="#7e7e7e"/><rect x="319.76" y="0.2" width="0.8" height="2" fill="#a2a2a2"/><rect x="325.10" y="0.2" width="0.8" height="2" fill="#7e7e7e"/><rect x="330.43" y="0.2" width="0.8" height="2" fill="#a2a2a2"/><rect x="335.77" y="0.2" width="0.8" height="2" fill="#7e7e7e"/><rect x="341.10" y="0.2" width="0.8" height="2" fill="#a2a2a2"/><rect x="346.44" y="0.2" width="0.8" height="2" fill="#7e7e7e"/><rect x="351.78" y="0.2" width="0.8" height="2" fill="#a2a2a2"/><rect x="357.11" y="0.2" width="0.8" height="2" fill="#7e7e7e"/><rect x="362.45" y="0.2" width="0.8" height="2" fill="#a2a2a2"/><rect x="367.78" y="0.2" width="0.8" height="2" fill="#7e7e7e"/><rect x="373.12" y="0.2" width="0.8" height="2" fill="#a2a2a2"/><rect x="378.46" y="0.2" width="0.8" height="2" fill="#7e7e7e"/><rect x="383.79" y="0.2" width="0.8" height="2" fill="#a2a2a2"/><rect x="389.13" y="0.2" width="0.8" height="2" fill="#7e7e7e"/><rect x="394.46" y="0.2" width="0.8" height="2" fill="#a2a2a2"/><rect x="399.80" y="0.2" width="0.8" height="2" fill="#7e7e7e"/><rect x="405.14" y="0.2" width="0.8" height="2" fill="#a2a2a2"/><rect x="410.47" y="0.2" width="0.8" height="2" fill="#7e7e7e"/><rect x="415.81" y="0.2" width="0.8" height="2" fill="#a2a2a2"/><rect x="421.14" y="0.2" width="0.8" height="2" fill="#7e7e7e"/><rect x="426.48" y="0.2" width="0.8" height="2" fill="#a2a2a2"/><rect x="431.82" y="0.2" width="0.8" height="2" fill="#7e7e7e"/><rect x="437.15" y="0.2" width="0.8" height="2" fill="#a2a2a2"/><rect x="442.49" y="0.2" width="0.8" height="2" fill="#7e7e7e"/><rect x="447.82" y="0.2" width="0.8" height="2" fill="#a2a2a2"/><rect x="453.16" y="0.2" width="0.8" height="2" fill="#7e7e7e"/><rect x="458.50" y="0.2" width="0.8" height="2" fill="#a2a2a2"/><rect x="463.83" y="0.2" width="0.8" height="2" fill="#7e7e7e"/><rect x="469.17" y="0.2" width="0.8" height="2" fill="#a2a2a2"/><rect x="474.50" y="0.2" width="0.8" height="2" fill="#7e7e7e"/><rect x="479.84" y="0.2" width="0.8" height="2" fill="#a2a2a2"/><rect x="485.18" y="0.2" width="0.8" height="2" fill="#7e7e7e"/><rect x="490.51" y="0.2" width="0.8" height="2" fill="#a2a2a2"/><rect x="495.85" y="0.2" width="0.8" height="2" fill="#7e7e7e"/><rect x="501.18" y="0.2" width="0.8" height="2" fill="#a2a2a2"/><rect x="506.52" y="0.2" width="0.8" height="2" fill="#7e7e7e"/><rect x="511.86" y="0.2" width="0.8" height="2" fill="#a2a2a2"/><rect x="517.19" y="0.2" width="0.8" height="2" fill="#7e7e7e"/><rect x="522.53" y="0.2" width="0.8" height="2" fill="#a2a2a2"/><rect x="527.86" y="0.2" width="0.8" height="2" fill="#7e7e7e"/><rect x="533.20" y="0.2" width="0.8" height="2" fill="#a2a2a2"/><rect x="538.54" y="0.2" width="0.8" height="2" fill="#7e7e7e"/><rect x="543.87" y="0.2" width="0.8" height="2" fill="#a2a2a2"/><rect x="549.21" y="0.2" width="0.8" height="2" fill="#7e7e7e"/><rect x="554.54" y="0.2" width="0.8" height="2" fill="#a2a2a2"/><rect x="559.88" y="0.2" width="0.8" height="2" fill="#7e7e7e"/><rect x="565.22" y="0.2" width="0.8" height="2" fill="#a2a2a2"/><rect x="570.55" y="0.2" width="0.8" height="2" fill="#7e7e7e"/><rect x="575.89" y="0.2" width="0.8" height="2" fill="#a2a2a2"/><rect x="581.22" y="0.2" width="0.8" height="2" fill="#7e7e7e"/><rect x="586.56" y="0.2" width="0.8" height="2" fill="#a2a2a2"/><rect x="591.90" y="0.2" width="0.8" height="2" fill="#7e7e7e"/><rect x="597.23" y="0.2" width="0.8" height="2" fill="#a2a2a2"/><rect x="602.57" y="0.2" width="0.8" height="2" fill="#7e7e7e"/><rect x="607.90" y="0.2" width="0.8" height="2" fill="#a2a2a2"/><rect x="613.24" y="0.2" width="0.8" height="2" fill="#7e7e7e"/><rect x="618.58" y="0.2" width="0.8" height="2" fill="#a2a2a2"/><rect x="623.91" y="0.2" width="0.8" height="2" fill="#7e7e7e"/><rect x="629.25" y="0.2" width="0.8" height="2" fill="#a2a2a2"/><rect x="634.58" y="0.2" width="0.8" height="2" fill="#7e7e7e"/><rect x="639.92" y="0.2" width="0.8" height="2" fill="#a2a2a2"/><rect x="645.26" y="0.2" width="0.8" height="2" fill="#7e7e7e"/><rect x="650.59" y="0.2" width="0.8" height="2" fill="#a2a2a2"/><rect x="655.93" y="0.2" width="0.8" height="2" fill="#7e7e7e"/><rect x="661.26" y="0.2" width="0.8" height="2" fill="#a2a2a2"/><rect x="666.60" y="0.2" width="0.8" height="2" fill="#7e7e7e"/><rect x="671.94" y="0.2" width="0.8" height="2" fill="#a2a2a2"/><rect x="677.27" y="0.2" width="0.8" height="2" fill="#7e7e7e"/><rect x="682.61" y="0.2" width="0.8" height="2" fill="#a2a2a2"/><rect x="687.94" y="0.2" width="0.8" height="2" fill="#7e7e7e"/><rect x="693.28" y="0.2" width="0.8" height="2" fill="#a2a2a2"/><rect x="698.62" y="0.2" width="0.8" height="2" fill="#7e7e7e"/><rect x="703.95" y="0.2" width="0.8" height="2" fill="#a2a2a2"/><rect x="709.29" y="0.2" width="0.8" height="2" fill="#7e7e7e"/><rect x="714.62" y="0.2" width="0.8" height="2" fill="#a2a2a2"/><rect x="719.96" y="0.2" width="0.8" height="2" fill="#7e7e7e"/><rect x="725.30" y="0.2" width="0.8" height="2" fill="#a2a2a2"/><rect x="730.63" y="0.2" width="0.8" height="2" fill="#7e7e7e"/><rect x="735.97" y="0.2" width="0.8" height="2" fill="#a2a2a2"/><rect x="741.30" y="0.2" width="0.8" height="2" fill="#7e7e7e"/><rect x="746.64" y="0.2" width="0.8" height="2" fill="#a2a2a2"/><rect x="751.98" y="0.2" width="0.8" height="2" fill="#7e7e7e"/><rect x="757.31" y="0.2" width="0.8" height="2" fill="#a2a2a2"/><rect x="762.65" y="0.2" width="0.8" height="2" fill="#7e7e7e"/><rect x="767.98" y="0.2" width="0.8" height="2" fill="#a2a2a2"/><rect x="773.32" y="0.2" width="0.8" height="2" fill="#7e7e7e"/><rect x="778.66" y="0.2" width="0.8" height="2" fill="#a2a2a2"/><rect x="783.99" y="0.2" width="0.8" height="2" fill="#7e7e7e"/><rect x="789.33" y="0.2" width="0.8" height="2" fill="#a2a2a2"/><rect x="794.66" y="0.2" width="0.8" height="2" fill="#7e7e7e"/><rect x="800.00" y="0.2" width="0.8" height="2" fill="#a2a2a2"/><rect x="805.34" y="0.2" width="0.8" height="2" fill="#7e7e7e"/><rect x="810.67" y="0.2" width="0.8" height="2" fill="#a2a2a2"/><rect x="816.01" y="0.2" width="0.8" height="2" fill="#7e7e7e"/><rect x="821.34" y="0.2" width="0.8" height="2" fill="#a2a2a2"/><rect x="826.68" y="0.2" width="0.8" height="2" fill="#7e7e7e"/><rect x="832.02" y="0.2" width="0.8" height="2" fill="#a2a2a2"/><rect x="837.35" y="0.2" width="0.8" height="2" fill="#7e7e7e"/><rect x="842.69" y="0.2" width="0.8" height="2" fill="#a2a2a2"/><rect x="848.02" y="0.2" width="0.8" height="2" fill="#7e7e7e"/><rect x="853.36" y="0.2" width="0.8" height="2" fill="#a2a2a2"/><rect x="858.70" y="0.2" width="0.8" height="2" fill="#7e7e7e"/></svg>
<div class="t" style="left:172.4px;top:603.5px;color:#e4e4e4;font-size:8px;transform:scaleX(0.9881);">5</div>
<div class="t" style="left:199.1px;top:603.5px;color:#e4e4e4;font-size:8px;transform:scaleX(0.8758);">10</div>
<div class="t" style="left:225.8px;top:603.5px;color:#e4e4e4;font-size:8px;transform:scaleX(0.8758);">15</div>
<div class="t" style="left:252.5px;top:603.5px;color:#e4e4e4;font-size:8px;transform:scaleX(0.8758);">20</div>
<div class="t" style="left:279.2px;top:603.5px;color:#e4e4e4;font-size:8px;transform:scaleX(0.8758);">25</div>
<div class="t" style="left:305.8px;top:603.5px;color:#e4e4e4;font-size:8px;transform:scaleX(0.8758);">30</div>
<div class="t" style="left:332.5px;top:603.5px;color:#e4e4e4;font-size:8px;transform:scaleX(0.8758);">35</div>
<div class="t" style="left:359.2px;top:603.5px;color:#e4e4e4;font-size:8px;transform:scaleX(0.8758);">40</div>
<div class="t" style="left:385.9px;top:603.5px;color:#e4e4e4;font-size:8px;transform:scaleX(0.8758);">45</div>
<div class="t" style="left:412.6px;top:603.5px;color:#e4e4e4;font-size:8px;transform:scaleX(0.8758);">50</div>
<div class="t" style="left:439.2px;top:603.5px;color:#e4e4e4;font-size:8px;transform:scaleX(0.8758);">55</div>
<div class="t" style="left:465.9px;top:603.5px;color:#e4e4e4;font-size:8px;transform:scaleX(0.8758);">60</div>
<div class="t" style="left:492.6px;top:603.5px;color:#e4e4e4;font-size:8px;transform:scaleX(0.8758);">65</div>
<div class="t" style="left:519.3px;top:603.5px;color:#e4e4e4;font-size:8px;transform:scaleX(0.8758);">70</div>
<div class="t" style="left:546.0px;top:603.5px;color:#e4e4e4;font-size:8px;transform:scaleX(0.8758);">75</div>
<div class="t" style="left:572.6px;top:603.5px;color:#e4e4e4;font-size:8px;transform:scaleX(0.8758);">80</div>
<div class="t" style="left:599.3px;top:603.5px;color:#e4e4e4;font-size:8px;transform:scaleX(0.8758);">85</div>
<div class="t" style="left:626.0px;top:603.5px;color:#e4e4e4;font-size:8px;transform:scaleX(0.8758);">90</div>
<div class="t" style="left:652.7px;top:603.5px;color:#e4e4e4;font-size:8px;transform:scaleX(0.8758);">95</div>
<div class="t" style="left:679.4px;top:603.5px;color:#e4e4e4;font-size:8px;transform:scaleX(0.8833);">100</div>
<div class="t" style="left:706.0px;top:603.5px;color:#e4e4e4;font-size:8px;transform:scaleX(0.8833);">105</div>
<div class="t" style="left:732.7px;top:603.5px;color:#e4e4e4;font-size:8px;transform:scaleX(0.9244);">110</div>
<div class="t" style="left:759.4px;top:603.5px;color:#e4e4e4;font-size:8px;transform:scaleX(0.9244);">115</div>
<div class="t" style="left:786.1px;top:603.5px;color:#e4e4e4;font-size:8px;transform:scaleX(0.8833);">120</div>
<div class="t" style="left:812.8px;top:603.5px;color:#e4e4e4;font-size:8px;transform:scaleX(0.8833);">125</div>
<div class="t" style="left:839.4px;top:603.5px;color:#e4e4e4;font-size:8px;transform:scaleX(0.8833);">130</div>
<div class="t" style="left:866.1px;top:603.5px;color:#e4e4e4;font-size:8px;transform:scaleX(0.8833);">135</div>
<div class="t" style="left:892.8px;top:603.5px;color:#e4e4e4;font-size:8px;transform:scaleX(0.8833);">140</div>
<div class="t" style="left:919.5px;top:603.5px;color:#e4e4e4;font-size:8px;transform:scaleX(0.8833);">145</div>
<div class="t" style="left:946.2px;top:603.5px;color:#e4e4e4;font-size:8px;transform:scaleX(0.8833);">150</div>
<div class="t" style="left:972.8px;top:603.5px;color:#e4e4e4;font-size:8px;transform:scaleX(0.8833);">155</div>
<div class="t" style="left:999.5px;top:603.5px;color:#e4e4e4;font-size:8px;transform:scaleX(0.8833);">160</div>
<div class="t" style="left:306.1px;top:593.4px;color:#cfcfcf;font-size:8px;transform:scaleX(0.8518);">1s</div>
<div class="r" style="left:305.544px;top:613.2px;width:1.2px;height:2.8px;background:#f4f4f4;"></div>
<div class="t" style="left:466.2px;top:593.4px;color:#cfcfcf;font-size:8px;transform:scaleX(0.8518);">2s</div>
<div class="r" style="left:465.624px;top:613.2px;width:1.2px;height:2.8px;background:#f4f4f4;"></div>
<div class="t" style="left:626.3px;top:593.4px;color:#cfcfcf;font-size:8px;transform:scaleX(0.8518);">3s</div>
<div class="r" style="left:625.704px;top:613.2px;width:1.2px;height:2.8px;background:#f4f4f4;"></div>
<div class="t" style="left:786.4px;top:593.4px;color:#cfcfcf;font-size:8px;transform:scaleX(0.8518);">4s</div>
<div class="r" style="left:785.784px;top:613.2px;width:1.2px;height:2.8px;background:#f4f4f4;"></div>
<div class="t" style="left:946.5px;top:593.4px;color:#cfcfcf;font-size:8px;transform:scaleX(0.8518);">5s</div>
<div class="r" style="left:945.864px;top:613.2px;width:1.2px;height:2.8px;background:#f4f4f4;"></div>
<div class="r" style="left:150.2px;top:595.8px;width:7.6px;height:19.6px;background:#962a2a;"></div>
<div class="t" style="left:151.7px;top:603.5px;color:#ffffff;font-size:8px;transform:scaleX(0.7635);">1</div>
<div class="r" style="left:152.2px;top:615.4px;width:1.5px;height:68px;background:#9e2e2e;"></div>
<div class="r" style="left:0px;top:683px;width:150px;height:8px;background:#4a4a4a;"></div>
<div class="r" style="left:152px;top:683px;width:872px;height:8px;background:#4a4a4a;"></div>
<div class="r" style="left:152px;top:683.8px;width:210px;height:6.6px;background:#5e5e5e;border-radius:0 3.3px 3.3px 0;"></div>
<div class="r" style="left:0px;top:691px;width:1024px;height:2px;background:#3a3a3a;"></div>
<div class="r" style="left:1026px;top:20px;width:254px;height:8.5px;background:#3f3f3f;"></div>
<div class="r" style="left:1026px;top:20px;width:254px;height:1px;background:#393939;"></div>
<svg class="r" style="left:1041.5px;top:22.6px" width="6" height="4" viewBox="0 0 6 4"><path d="M2.6 0.2L0.4 2L2.6 3.8z M5.6 0.2L3.4 2L5.6 3.8z" fill="#c8c8c8"/></svg>
<svg class="r" style="left:1243.5px;top:22.6px" width="6" height="4" viewBox="0 0 6 4"><path d="M0.4 0.2L2.6 2L0.4 3.8z M3.4 0.2L5.6 2L3.4 3.8z" fill="#c8c8c8"/></svg>
<svg class="r" style="left:1270px;top:22.6px" width="6" height="4" viewBox="0 0 6 4"><path d="M0.4 0.2L2.6 2L0.4 3.8z M3.4 0.2L5.6 2L3.4 3.8z" fill="#c8c8c8"/></svg>
<div class="r" style="left:1026px;top:28.5px;width:25px;height:664.5px;background:#535353;"></div>
<div class="r" style="left:1026px;top:74px;width:25px;height:1px;background:#3e3e3e;"></div>
<div class="r" style="left:1026px;top:138.5px;width:25px;height:1px;background:#3e3e3e;"></div>
<div class="r" style="left:1026px;top:166.5px;width:25px;height:1px;background:#3e3e3e;"></div>
<div class="r" style="left:1026px;top:193.5px;width:25px;height:1px;background:#3e3e3e;"></div>
<svg class="r" style="left:1034px;top:31.5px" width="9" height="2" viewBox="0 0 9 2"><path d="M0 0.5h9M0 1.5h9" stroke="#626262" stroke-width="0.7" stroke-dasharray="1 1"/></svg>
<svg class="r" style="left:1034px;top:77.5px" width="9" height="2" viewBox="0 0 9 2"><path d="M0 0.5h9M0 1.5h9" stroke="#626262" stroke-width="0.7" stroke-dasharray="1 1"/></svg>
<svg class="r" style="left:1034px;top:142px" width="9" height="2" viewBox="0 0 9 2"><path d="M0 0.5h9M0 1.5h9" stroke="#626262" stroke-width="0.7" stroke-dasharray="1 1"/></svg>
<svg class="r" style="left:1034px;top:169.5px" width="9" height="2" viewBox="0 0 9 2"><path d="M0 0.5h9M0 1.5h9" stroke="#626262" stroke-width="0.7" stroke-dasharray="1 1"/></svg>
<div class="r" style="left:1050.6px;top:28.5px;width:2.4px;height:664.5px;background:#404040;"></div>
<div class="r" style="left:1053px;top:28.5px;width:200px;height:11.5px;background:#444444;"></div>
<div class="r" style="left:1053px;top:39.4px;width:200px;height:0.8px;background:#3c3c3c;"></div>
<div class="r" style="left:1053px;top:28.5px;width:39.5px;height:12px;background:#535353;"></div>
<div class="t" style="left:1057.3px;top:27.5px;color:#f4f4f4;font-size:8.5px;font-weight:bold;transform:scaleX(0.7425);">Свойства</div>
<div class="r" style="left:1093px;top:29px;width:48.5px;height:11px;background:#4b4b4b;"></div>
<div class="t" style="left:1097.5px;top:27.5px;color:#b8b8b8;font-size:8.5px;font-weight:bold;transform:scaleX(0.7662);">Библиотека</div>
<div class="r" style="left:1242px;top:31.8px;width:7.5px;height:1.2px;background:#8e8e8e;"></div>
<div class="r" style="left:1242px;top:34px;width:7.5px;height:3px;background:#a8a8a8;"></div>
<div class="r" style="left:1053px;top:40px;width:200px;height:651px;background:#535353;"></div>
<div class="r" style="left:1253px;top:28.5px;width:2px;height:664.5px;background:#3a3a3a;"></div>
<div class="r" style="left:1255px;top:28.5px;width:25px;height:11.5px;background:#444444;"></div>
<div class="r" style="left:1255px;top:39.4px;width:25px;height:0.8px;background:#3c3c3c;"></div>
<div class="r" style="left:1267px;top:31.8px;width:7.5px;height:1.2px;background:#8e8e8e;"></div>
<div class="r" style="left:1267px;top:34px;width:7.5px;height:3px;background:#a8a8a8;"></div>
<div class="r" style="left:1255px;top:40px;width:25px;height:651px;background:#535353;"></div>
<div class="r" style="left:1026px;top:691px;width:254px;height:2px;background:#3a3a3a;"></div>
<div class="t" style="left:1101.0px;top:44.8px;color:#d8d8d8;font-size:9px;transform:scaleX(0.8714);">Документ</div>
<svg class="r" style="left:1071.5px;top:55.5px" width="12" height="11" viewBox="0 0 12 11"><rect x="0.6" y="0.6" width="10.8" height="9.8" fill="none" stroke="#d8d8d8" stroke-width="1.1"/></svg>
<div class="t" style="left:1073.5px;top:54.0px;color:#d8d8d8;font-size:7px;font-weight:bold;transform:scaleX(0.8562);">An</div>
<div class="t" style="left:1101.2px;top:64.7px;color:#d8d8d8;font-size:9px;transform:scaleX(0.8073);">Безымянный-1</div>
<div class="r" style="left:1053px;top:81.9px;width:200px;height:1px;background:#454545;"></div>
<div class="r" style="left:1053px;top:82.9px;width:200px;height:1px;background:#575757;"></div>
<div class="r" style="left:1053px;top:128.8px;width:200px;height:1px;background:#454545;"></div>
<div class="r" style="left:1053px;top:129.8px;width:200px;height:1px;background:#575757;"></div>
<div class="r" style="left:1053px;top:169.9px;width:200px;height:1px;background:#454545;"></div>
<div class="r" style="left:1053px;top:170.9px;width:200px;height:1px;background:#575757;"></div>
<div class="r" style="left:1053px;top:198.7px;width:200px;height:1px;background:#454545;"></div>
<div class="r" style="left:1053px;top:199.7px;width:200px;height:1px;background:#575757;"></div>
<div class="r" style="left:1053px;top:252.7px;width:200px;height:1px;background:#454545;"></div>
<div class="r" style="left:1053px;top:253.7px;width:200px;height:1px;background:#575757;"></div>
<div class="r" style="left:1053px;top:312.5px;width:200px;height:1px;background:#454545;"></div>
<div class="r" style="left:1053px;top:313.5px;width:200px;height:1px;background:#575757;"></div>
<div class="r" style="left:1053px;top:355.7px;width:200px;height:1px;background:#454545;"></div>
<div class="r" style="left:1053px;top:356.7px;width:200px;height:1px;background:#575757;"></div>
<div class="r" style="left:1053px;top:437.9px;width:200px;height:1px;background:#454545;"></div>
<div class="r" style="left:1053px;top:438.9px;width:200px;height:1px;background:#575757;"></div>
<svg class="r" style="left:1055.5px;top:87.3px" width="7" height="4" viewBox="0 0 7 4"><path d="M0.2 0.2h6.6L3.5 3.8z" fill="#d8d8d8"/></svg>
<div class="t" style="left:1065.7px;top:82.0px;color:#d8d8d8;font-size:9px;transform:scaleX(0.8478);">Опубликовать</div>
<div class="t" style="left:1063.7px;top:100.0px;color:#bdbdbd;font-size:9px;transform:scaleX(0.8293);">Профиль:</div>
<div class="t" style="left:1101.5px;top:100.0px;color:#d8d8d8;font-size:9px;transform:scaleX(0.8361);">По умо...</div>
<div class="r" style="left:1101.3px;top:112.8px;width:102.5px;height:12px;background:#535353;border:1px solid #646464;border-radius:2px;"></div>
<div class="t" style="left:1106.4px;top:112.2px;color:#ececec;font-size:9px;transform:scaleX(0.8264);">Параметры публикации...</div>
<div class="t" style="left:1077.7px;top:133.0px;color:#bdbdbd;font-size:9px;transform:scaleX(0.8525);">Цель:</div>
<div class="r" style="left:1101.8px;top:133.4px;width:62.5px;height:10.8px;background:#484848;border-radius:1.5px;"></div>
<div class="t" style="left:1105.7px;top:132.0px;color:#ececec;font-size:9px;transform:scaleX(0.8234);">Flash Playe...</div>
<svg class="r" style="left:1155.1px;top:137px" width="6.4" height="4.2" viewBox="0 0 6.4 4.2"><path d="M0.6 0.6L3.2 3.3L5.8 0.6" fill="none" stroke="#d0d0d0" stroke-width="1"/></svg>
<div class="t" style="left:1061.7px;top:151.4px;color:#bdbdbd;font-size:9px;transform:scaleX(0.8162);">Сценарий:</div>
<div class="r" style="left:1101.8px;top:152px;width:62.5px;height:11px;background:#484848;border-radius:1.5px;"></div>
<div class="t" style="left:1105.7px;top:150.7px;color:#ececec;font-size:9px;transform:scaleX(0.8467);">ActionScrip...</div>
<svg class="r" style="left:1155.1px;top:155.7px" width="6.4" height="4.2" viewBox="0 0 6.4 4.2"><path d="M0.6 0.6L3.2 3.3L5.8 0.6" fill="none" stroke="#d0d0d0" stroke-width="1"/></svg>
<svg class="r" style="left:1170px;top:152.5px" width="10" height="10.5" viewBox="0 0 10 10.5"><circle cx="3.1" cy="3.1" r="2.8" fill="#d6d6d6"/><path d="M3.3 3.3L-0.3 2.4L2.4 -0.3z" fill="#535353"/><circle cx="2.5" cy="2.5" r="0.9" fill="#535353"/><path d="M4.6 4.6L8.2 8.6" stroke="#d6d6d6" stroke-width="2.3" stroke-linecap="round"/></svg>
<div class="t" style="left:1075.5px;top:175.0px;color:#bdbdbd;font-size:9px;transform:scaleX(0.8333);">Класс:</div>
<div class="r" style="left:1101.8px;top:175.4px;width:62.5px;height:10.8px;background:#454545;border-radius:1px;"></div>
<svg class="r" style="left:1171.5px;top:176px" width="9" height="9" viewBox="0 0 9 9"><path d="M5.6 3.4L2.6 6.4" stroke="#a2a2a2" stroke-width="2.2"/><circle cx="6.6" cy="2.3" r="1.7" fill="#f2f2f2"/><path d="M1.7 5.4L3.6 7.3L0.7 8.3z" fill="#e6e6e6"/></svg>
<svg class="r" style="left:1055.5px;top:204.6px" width="7" height="4" viewBox="0 0 7 4"><path d="M0.2 0.2h6.6L3.5 3.8z" fill="#d8d8d8"/></svg>
<div class="t" style="left:1065.7px;top:199.3px;color:#d8d8d8;font-size:9px;transform:scaleX(0.8297);">Свойства</div>
<div class="t" style="left:1083.4px;top:216.9px;color:#bdbdbd;font-size:9px;transform:scaleX(0.7194);">FPS:</div>
<div class="t" style="left:1102.3px;top:216.9px;color:#ececec;font-size:9px;transform:scaleX(0.8166);">30,00</div>
<div class="r" style="left:1102.5px;top:228.2px;width:18px;height:0.8px;background:#8a8a8a;"></div>
<div class="r" style="left:1102px;top:238px;width:8px;height:8px;background:#4e4e4e;border:1px solid #b4b4b4;border-radius:0.5px;"></div>
<div class="t" style="left:1113.3px;top:235.0px;color:#e4e4e4;font-size:9px;transform:scaleX(0.8241);">Масштаб. диапазоны кадров</div>
<div class="t" style="left:1070.3px;top:256.4px;color:#bdbdbd;font-size:9px;transform:scaleX(0.8284);">Размер:</div>
<div class="t" style="left:1102.0px;top:256.4px;color:#bdbdbd;font-size:9px;transform:scaleX(0.8837);">Ш:</div>
<div class="t" style="left:1117.1px;top:256.2px;color:#ececec;font-size:9px;transform:scaleX(0.8087);">1280</div>
<div class="r" style="left:1117.3px;top:267px;width:16px;height:0.8px;background:#8a8a8a;"></div>
<svg class="r" style="left:1150.5px;top:258.5px" width="10" height="9" viewBox="0 0 10 9"><path d="M4 1.5H3a3 3 0 0 0 0 6H4M6 1.5H7a3 3 0 0 1 0 6H6" fill="none" stroke="#cfcfcf" stroke-width="1" stroke-dasharray="1.4 0.8"/><path d="M3.4 4.5h3.2" stroke="#cfcfcf" stroke-width="1"/></svg>
<div class="t" style="left:1172.2px;top:256.4px;color:#bdbdbd;font-size:9px;transform:scaleX(0.8455);">В:</div>
<div class="t" style="left:1187.9px;top:256.2px;color:#ececec;font-size:9px;transform:scaleX(0.8249);">720</div>
<div class="r" style="left:1188px;top:267px;width:12.2px;height:0.8px;background:#8a8a8a;"></div>
<div class="t" style="left:1225.4px;top:256.6px;color:#bdbdbd;font-size:9px;transform:scaleX(0.8257);">пикс.</div>
<div class="r" style="left:1102px;top:277.6px;width:8px;height:8px;background:#4e4e4e;border:1px solid #b4b4b4;border-radius:0.5px;"></div>
<div class="t" style="left:1113.3px;top:274.5px;color:#e4e4e4;font-size:9px;transform:scaleX(0.8173);">Масштаб. содержимое</div>
<div class="r" style="left:1101.3px;top:294.3px;width:120.6px;height:12px;background:#535353;border:1px solid #646464;border-radius:2px;"></div>
<div class="t" style="left:1124.2px;top:293.8px;color:#ececec;font-size:9px;transform:scaleX(0.8536);">Дополн. настройки...</div>
<div class="t" style="left:1057.4px;top:317.4px;color:#bdbdbd;font-size:9px;transform:scaleX(0.8679);">Монт. стол:</div>
<div class="r" style="left:1103.3px;top:318.5px;width:20px;height:10px;background:#ffffff;border:1px solid #2a2a2a;border-radius:1px;"></div>
<div class="r" style="left:1104px;top:335.4px;width:8px;height:8px;background:#4e4e4e;border:1px solid #b4b4b4;border-radius:0.5px;"></div>
<div class="t" style="left:1115.5px;top:332.6px;color:#e4e4e4;font-size:9px;transform:scaleX(0.8271);">Применить к области вставки</div>
<svg class="r" style="left:1055.5px;top:361.7px" width="7" height="4" viewBox="0 0 7 4"><path d="M0.2 0.2h6.6L3.5 3.8z" fill="#d8d8d8"/></svg>
<div class="t" style="left:1065.7px;top:356.4px;color:#d8d8d8;font-size:9px;transform:scaleX(0.7978);">История SWF</div>
<div class="r" style="left:1067.3px;top:373px;width:39.4px;height:11px;background:#585858;border-radius:1px;"></div>
<div class="t" style="left:1072.7px;top:371.7px;color:#6f6f6f;font-size:9px;transform:scaleX(0.8708);">Журнал</div>
<div class="r" style="left:1150.3px;top:373px;width:39.5px;height:11px;background:#585858;border-radius:1px;"></div>
<div class="t" style="left:1155.3px;top:371.7px;color:#6f6f6f;font-size:9px;transform:scaleX(0.8116);">Удалить</div>
<svg class="r" style="left:1057.8px;top:441px" width="4" height="7" viewBox="0 0 4 7"><path d="M0.2 0.2v6.6L3.8 3.5z" fill="#d8d8d8"/></svg>
<div class="t" style="left:1065.7px;top:437.5px;color:#d8d8d8;font-size:9px;transform:scaleX(0.8177);">Расширенный доступ</div>
<svg class="r" style="left:1032px;top:39px" width="14" height="10" viewBox="0 0 14 10"><path d="M7.2 0.3C3.2 0.3 0.3 2.6 0.3 5.4C0.3 8 2.6 9.7 5.6 9.7C7 9.7 7.2 8.9 6.9 8.2C6.6 7.4 7.2 6.8 8.2 6.8H10.6C12.6 6.8 13.7 5.7 13.7 4.3C13.7 2 10.8 0.3 7.2 0.3z" fill="#d2d2d2"/><circle cx="3" cy="4.6" r="1" fill="#535353"/><circle cx="5.2" cy="2.7" r="1" fill="#535353"/><circle cx="8.3" cy="2.3" r="1" fill="#535353"/><circle cx="11" cy="3.6" r="1" fill="#535353"/><circle cx="3.9" cy="7.2" r="1" fill="#535353"/></svg>
<svg class="r" style="left:1032.5px;top:58.8px" width="12" height="8.2" viewBox="0 0 12 8.2"><rect x="0" y="0" width="12" height="8.2" fill="#cfcfcf"/><rect x="0.9" y="0.9" width="3" height="2.8" fill="#9c9c9c"/><rect x="4.5" y="0.9" width="3" height="2.8" fill="#b4b4b4"/><rect x="8.1" y="0.9" width="3" height="2.8" fill="#6e6e6e"/><rect x="0.9" y="4.5" width="3" height="2.8" fill="#b0b0b0"/><rect x="4.5" y="4.5" width="3" height="2.8" fill="#787878"/><rect x="8.1" y="4.5" width="3" height="2.8" fill="#a4a4a4"/></svg>
<svg class="r" style="left:1033.5px;top:84px" width="11" height="12" viewBox="0 0 11 12"><rect x="0.3" y="0" width="1.1" height="12" fill="#d2d2d2"/><rect x="2" y="2.2" width="5.7" height="3.4" fill="#d2d2d2"/><rect x="2" y="7" width="8.7" height="3.7" fill="#d2d2d2"/></svg>
<svg class="r" style="left:1033.5px;top:103.7px" width="11" height="11" viewBox="0 0 11 11"><circle cx="5.5" cy="5.5" r="5.3" fill="#d2d2d2"/><circle cx="5.6" cy="2.7" r="1.05" fill="#4a4a4a"/><path d="M4.1 4.4h2.5v3.6h1v1H4v-1h1V5.4h-0.9z" fill="#4a4a4a"/></svg>
<svg class="r" style="left:1034px;top:122.2px" width="11" height="11" viewBox="0 0 11 11"><rect x="1.2" y="1.2" width="8.6" height="8.6" fill="none" stroke="#d2d2d2" stroke-width="0.9" stroke-dasharray="1 0.9"/><path d="M0 0h2.4v2.4h-2.4z M8.6 0h2.4v2.4h-2.4z M0 8.6h2.4v2.4h-2.4z M8.6 8.6h2.4v2.4h-2.4z M4.3 0h2.4v2h-2.4z M4.3 9h2.4v2h-2.4z M0 4.3h2v2.4h-2z M9 4.3h2v2.4h-2z" fill="#d2d2d2"/><rect x="4.7" y="4.7" width="1.6" height="1.6" fill="#9a9a9a"/></svg>
<svg class="r" style="left:1032px;top:147.5px" width="13" height="14" viewBox="0 0 13 14"><circle cx="3.4" cy="10.8" r="2.8" fill="#d2d2d2"/><circle cx="8.9" cy="7.2" r="2.2" fill="#d2d2d2"/><circle cx="10.3" cy="2" r="1.45" fill="#d2d2d2"/></svg>
<svg class="r" style="left:1032px;top:176.3px" width="14" height="11.5" viewBox="0 0 14 11.5"><path d="M4 10.8A3.6 3.6 0 0 1 2.4 4.3A4.6 4.6 0 0 1 10.6 2.9A3.9 3.9 0 0 1 10.6 10.8z" fill="#4a4a4a" stroke="#d2d2d2" stroke-width="1"/><path d="M5.4 8.6A2.2 2.2 0 0 1 5.4 4.4C6.4 4.4 7 5 7.6 5.8L9 7.6C9.5 8.2 10 8.6 10.6 8.6A1.7 1.7 0 0 0 10.6 5.2C10 5.2 9.6 5.4 9.2 5.8" fill="none" stroke="#d2d2d2" stroke-width="1"/><path d="M5.4 8.6C6.2 8.6 6.8 8.2 7.3 7.6" fill="none" stroke="#d2d2d2" stroke-width="1"/></svg>
<div class="r" style="left:1257px;top:135.5px;width:21px;height:1px;background:#464646;"></div>
<div class="r" style="left:1257px;top:306px;width:21px;height:1px;background:#464646;"></div>
<div class="r" style="left:1257px;top:439.5px;width:21px;height:1px;background:#464646;"></div>
<div class="r" style="left:1257px;top:500.2px;width:21px;height:1px;background:#464646;"></div>
<div class="r" style="left:1257px;top:584.8px;width:21px;height:1px;background:#464646;"></div>
<div class="r" style="left:1257px;top:43.8px;width:19.3px;height:15px;background:#2d2d2d;border-radius:2px;"></div>
<svg class="r" style="left:1257px;top:43px" width="20" height="16" viewBox="0 0 20 16"><path d="M6 3.2L14.3 10.2L9.6 10.6L7.1 14.3z" fill="#2d2d2d" stroke="#cdcdcd" stroke-width="1" stroke-linejoin="miter"/></svg>
<svg class="r" style="left:1257px;top:62px" width="20" height="16" viewBox="0 0 20 16"><path d="M6 3L14.4 9.7L9.4 10.4L6.6 14.4z" fill="#cdcdcd"/></svg>
<svg class="r" style="left:1257px;top:80px" width="20" height="17" viewBox="0 0 20 17"><rect x="7.5" y="5" width="8.6" height="8" fill="none" stroke="#cdcdcd" stroke-width="1" stroke-dasharray="1.4 1"/><path d="M3.2 3L9.6 7.9L5.9 8.4L3.8 12z" fill="#cdcdcd" stroke="#535353" stroke-width="0.5"/></svg>
<svg class="r" style="left:1273.8px;top:93.6px" width="2.7" height="2.7" viewBox="0 0 2.7 2.7"><path d="M2.7 0v2.7H0z" fill="#f4f4f4"/></svg>
<svg class="r" style="left:1260.4px;top:101.6px" width="12.4" height="11.8" viewBox="0 0 12.4 11.8"><path d="M6.2 0.4Q9.6 2.4 11.9 5.6Q9.6 9 6.2 11.4Q2.8 9 0.5 5.6Q2.8 2.4 6.2 0.4z" fill="#858585" stroke="#cdcdcd" stroke-width="0.9"/><path d="M0.7 5.8Q6.2 7.6 11.7 5.8" fill="none" stroke="#cdcdcd" stroke-width="0.9"/><path d="M6.2 0.5Q10 5.8 6.2 11.3" fill="none" stroke="#cdcdcd" stroke-width="0.9"/></svg>
<svg class="r" style="left:1273.8px;top:112.6px" width="2.7" height="2.7" viewBox="0 0 2.7 2.7"><path d="M2.7 0v2.7H0z" fill="#f4f4f4"/></svg>
<svg class="r" style="left:1259.5px;top:119px" width="14" height="13" viewBox="0 0 14 13"><ellipse cx="7.1" cy="5.8" rx="5.3" ry="3.5" transform="rotate(-12 7.1 5.8)" fill="none" stroke="#cdcdcd" stroke-width="1.1"/><circle cx="3.9" cy="8.4" r="1.3" fill="none" stroke="#cdcdcd" stroke-width="0.9"/><path d="M4.3 9.6C4.9 10.4 4.9 11.2 4.4 12.2" fill="none" stroke="#cdcdcd" stroke-width="0.9"/></svg>
<svg class="r" style="left:1273.8px;top:130.6px" width="2.7" height="2.7" viewBox="0 0 2.7 2.7"><path d="M2.7 0v2.7H0z" fill="#f4f4f4"/></svg>
<svg class="r" style="left:1260px;top:142px" width="14" height="12" viewBox="0 0 14 12"><path d="M1 11.2L2.4 5.6L7.6 2.2L11.2 5.6L7.4 9.8z" fill="#cdcdcd"/><path d="M8.2 1.4L10 0.2L13.4 3.6L12 5.2z" fill="#cdcdcd"/><path d="M1 11.2L5.6 6.8" stroke="#535353" stroke-width="0.8"/><circle cx="6.2" cy="6.3" r="0.9" fill="#535353"/></svg>
<svg class="r" style="left:1273.8px;top:152.1px" width="2.7" height="2.7" viewBox="0 0 2.7 2.7"><path d="M2.7 0v2.7H0z" fill="#f4f4f4"/></svg>
<svg class="r" style="left:1261.5px;top:160.5px" width="11" height="11" viewBox="0 0 11 11"><path d="M0.6 0.5h9.8v2.8h-1.1l-0.4-1.4H6.6v7.2l1.5 0.4v0.9H2.9v-0.9l1.5-0.4V1.9H2.1l-0.4 1.4H0.6z" fill="#cdcdcd"/></svg>
<svg class="r" style="left:1261px;top:179.5px" width="12" height="11" viewBox="0 0 12 11"><path d="M1 9.7L10.8 0.9" stroke="#cdcdcd" stroke-width="1.2"/></svg>
<svg class="r" style="left:1260.5px;top:197.8px" width="12.5" height="10.8" viewBox="0 0 12.5 10.8"><rect x="0.6" y="0.6" width="11.2" height="9.5" fill="#7c7c7c" stroke="#cdcdcd" stroke-width="1"/></svg>
<svg class="r" style="left:1273.8px;top:206.6px" width="2.7" height="2.7" viewBox="0 0 2.7 2.7"><path d="M2.7 0v2.7H0z" fill="#f4f4f4"/></svg>
<svg class="r" style="left:1260px;top:216.8px" width="14" height="10.5" viewBox="0 0 14 10.5"><ellipse cx="6.8" cy="5.2" rx="6.1" ry="4.5" fill="#7c7c7c" stroke="#cdcdcd" stroke-width="1"/></svg>
<svg class="r" style="left:1273.8px;top:225.6px" width="2.7" height="2.7" viewBox="0 0 2.7 2.7"><path d="M2.7 0v2.7H0z" fill="#f4f4f4"/></svg>
<svg class="r" style="left:1260.5px;top:235.5px" width="12.5" height="10" viewBox="0 0 12.5 10"><path d="M0.7 5L3.4 0.6H9L11.7 5L9 9.4H3.4z" fill="#7c7c7c" stroke="#cdcdcd" stroke-width="1"/></svg>
<svg class="r" style="left:1260.5px;top:254px" width="12.5" height="11.5" viewBox="0 0 12.5 11.5"><path d="M0.6 10.7L1.4 7.6L8.4 0.9a1 1 0 0 1 1.4 0l1.4 1.4a1 1 0 0 1 0 1.4L4 10z" fill="#cdcdcd"/><path d="M7.4 2.2l2.6 2.6" stroke="#535353" stroke-width="0.8"/><path d="M1.4 7.6L4 10" stroke="#535353" stroke-width="0.6"/></svg>
<svg class="r" style="left:1259px;top:272px" width="15" height="12" viewBox="0 0 15 12"><path d="M13.8 0.6L8.4 5.4l1.6 1.6L14.4 1.4z" fill="#cdcdcd"/><path d="M7.8 6L5.2 7.2C4.2 8 4.4 9.8 3.6 10.8C5.8 11 7.6 10.4 8.6 9.2L9.4 7.6z" fill="#cdcdcd"/><path d="M4.6 5.2C2.6 4.6 0.8 6 0.8 7.8C0.8 9.6 2.4 10.6 4 10.2" fill="none" stroke="#cdcdcd" stroke-width="0.9"/><path d="M4.6 5.2C5.6 4.4 6 3.4 5.6 2.4" fill="none" stroke="#cdcdcd" stroke-width="0.8"/></svg>
<svg class="r" style="left:1260.5px;top:290.5px" width="12.5" height="12" viewBox="0 0 12.5 12"><path d="M11.6 0.4L5.8 5.6l1.8 1.8L12.2 1.2z" fill="#cdcdcd"/><path d="M5.2 6.2L2.4 7.6C1.4 8.6 1.6 10.2 0.6 11.4C3 11.6 5.2 11 6.2 9.6L7 8z" fill="#cdcdcd"/></svg>
<svg class="r" style="left:1260.5px;top:312px" width="12.5" height="10.5" viewBox="0 0 12.5 10.5"><path d="M2.2 8.2L9.8 2.6" stroke="#cdcdcd" stroke-width="2"/><circle cx="1.8" cy="7.4" r="1.4" fill="#cdcdcd"/><circle cx="3" cy="9" r="1.4" fill="#cdcdcd"/><circle cx="9" cy="1.7" r="1.4" fill="#cdcdcd"/><circle cx="10.4" cy="3.4" r="1.4" fill="#cdcdcd"/></svg>
<svg class="r" style="left:1273.8px;top:322.1px" width="2.7" height="2.7" viewBox="0 0 2.7 2.7"><path d="M2.7 0v2.7H0z" fill="#f4f4f4"/></svg>
<svg class="r" style="left:1260px;top:330.5px" width="13.5" height="12" viewBox="0 0 13.5 12"><path d="M0.9 6.9L6.1 2L10.8 5.4L5.4 11.1z" fill="#cdcdcd"/><path d="M6 2.6L3.2 0.6" stroke="#cdcdcd" stroke-width="1"/><circle cx="6.2" cy="4" r="0.7" fill="#535353"/><path d="M10.4 4.9C12 5.4 12.2 7.4 11.6 9.4L9.8 9.2C10.4 7.8 10.2 6.6 9.6 6.2z" fill="#f0f0f0"/></svg>
<svg class="r" style="left:1259.5px;top:349px" width="14.5" height="12" viewBox="0 0 14.5 12"><path d="M1 5.5L4.5 2.5L8 4.5L4 8.5z" fill="#cdcdcd"/><path d="M4.4 3L2.4 1.4" stroke="#cdcdcd" stroke-width="0.9"/><path d="M8 4.2C8.8 4.8 8.8 5.8 8.6 6.6" fill="none" stroke="#cdcdcd" stroke-width="1.1"/><path d="M8.8 5.4H12.4v5.2H7.4V8.2" fill="none" stroke="#dcdcdc" stroke-width="1.3"/></svg>
<svg class="r" style="left:1260.5px;top:367.5px" width="12.5" height="12.5" viewBox="0 0 12.5 12.5"><path d="M0.8 11.8L1.6 9.4L7.4 3.6L9 5.2L3.2 11z" fill="#5f5f5f" stroke="#cdcdcd" stroke-width="0.9"/><path d="M6.6 2.8L9.8 6M8 3.8L10.2 0.8a1.2 1.2 0 0 1 1.6 1.6L8.8 4.6z" fill="#cdcdcd" stroke="#cdcdcd" stroke-width="0.9"/></svg>
<svg class="r" style="left:1260.5px;top:386px" width="12.5" height="12.5" viewBox="0 0 12.5 12.5"><path d="M0.6 7.4L6.6 0.8L12 4.4L6 11.6z" fill="#cdcdcd"/><path d="M0.6 7.4L6 11.6L4.6 12.2L0.4 8.8z" fill="#b0b0b0"/><path d="M2.4 5.4L7.8 9.4" stroke="#535353" stroke-width="0.8"/></svg>
<svg class="r" style="left:1260px;top:405.5px" width="14" height="12" viewBox="0 0 14 12"><path d="M0.8 9.6C3 9.8 4.2 8.2 5.4 6.8C6.6 5.4 7.6 7.8 9.2 7.2C10.8 6.6 10.8 4.4 12.2 4.6C13 4.8 13 6 12.7 7.2" fill="none" stroke="#cdcdcd" stroke-width="1.9" stroke-linecap="round"/><path d="M2.8 1.6C4.6 0.8 5.2 2.6 4.2 3.6C3.6 4.2 3.8 5 4.6 5.6" fill="none" stroke="#cdcdcd" stroke-width="1.4"/><path d="M7.4 2.4L8.6 4.4" stroke="#cdcdcd" stroke-width="1.1"/></svg>
<svg class="r" style="left:1260px;top:423.6px" width="12" height="11.5" viewBox="0 0 12 11.5"><path d="M6.4 0.6L10.4 4.4L9.4 5.2L8.4 4.8L6.8 6.6L7.2 8.6L6.2 9.4L2 5.2L2.8 4.2L4.8 4.6L6.6 3L6 1.6z" fill="#cdcdcd"/><path d="M4 7.4L0.8 10.6" stroke="#cdcdcd" stroke-width="1.2"/></svg>
<svg class="r" style="left:1260.5px;top:446.5px" width="12.5" height="8" viewBox="0 0 12.5 8"><rect x="0" y="0.2" width="7.4" height="7.6" rx="0.6" fill="#cdcdcd"/><path d="M7.8 4L12.2 0.8v6.4z" fill="#cdcdcd"/></svg>
<svg class="r" style="left:1260.5px;top:463.8px" width="12" height="11.5" viewBox="0 0 12 11.5"><path d="M3.4 7L2.6 3M5.2 6.4L5 1.2M7 6.4L7.5 1.6M8.8 7L10.2 3.4M3.4 8.8L0.9 6.6" fill="none" stroke="#cdcdcd" stroke-width="1.45" stroke-linecap="round"/><path d="M2.6 6.4C3.6 5.4 8.6 5.4 9.6 6.6C9.8 8.4 9 10.2 7.8 11H4.2C3 10.2 2.4 8.6 2.6 6.4z" fill="#cdcdcd"/></svg>
<svg class="r" style="left:1273.8px;top:475px" width="2.7" height="2.7" viewBox="0 0 2.7 2.7"><path d="M2.7 0v2.7H0z" fill="#f4f4f4"/></svg>
<svg class="r" style="left:1260px;top:482.5px" width="13" height="12.5" viewBox="0 0 13 12.5"><circle cx="4.7" cy="4.7" r="3.6" fill="none" stroke="#cdcdcd" stroke-width="1.2"/><path d="M7.4 7.4L11.8 11.6" stroke="#cdcdcd" stroke-width="1.7"/></svg>
<svg class="r" style="left:1262px;top:506.5px" width="9" height="9" viewBox="0 0 9 9"><path d="M0.4 8.6L0.9 6.4L6 1.3l1.7 1.7L2.6 8.1z" fill="#cdcdcd"/><path d="M6.6 0.7l1.7 1.7" stroke="#cdcdcd" stroke-width="1.3"/></svg>
<svg class="r" style="left:1260px;top:519.8px" width="13.5" height="13" viewBox="0 0 13.5 13"><rect x="0.5" y="0.5" width="12.5" height="12" fill="#ffffff" stroke="#3a3a3a" stroke-width="1"/><path d="M1 12L12.5 1" stroke="#d03030" stroke-width="1"/></svg>
<svg class="r" style="left:1260px;top:539px" width="12.5" height="12" viewBox="0 0 12.5 12"><rect x="0" y="0" width="12.5" height="12" rx="1" fill="#2b2b2b"/><rect x="2.6" y="2.6" width="7.3" height="6.8" fill="#a6a6a6" stroke="#e0e0e0" stroke-width="1"/></svg>
<div class="r" style="left:1260px;top:553.6px;width:13.3px;height:12.4px;background:#0a66dc;border:1px solid #2b2b2b;"></div>
<svg class="r" style="left:1257.5px;top:572px" width="8" height="8" viewBox="0 0 8 8"><rect x="0.5" y="0.5" width="4.8" height="4.8" fill="#fff" stroke="#111" stroke-width="1"/><rect x="2.8" y="2.8" width="4.6" height="4.6" fill="#111" stroke="#fff" stroke-width="0.8"/></svg>
<svg class="r" style="left:1267px;top:572px" width="9" height="8" viewBox="0 0 9 8"><rect x="0.4" y="0.4" width="2.6" height="2.6" fill="#7a7a7a"/><rect x="0.4" y="4.8" width="2.6" height="2.6" fill="#7a7a7a"/><path d="M4.2 1.6H6a1.8 1.8 0 0 1 1.8 1.8V6" fill="none" stroke="#7a7a7a" stroke-width="0.9"/><path d="M6.4 5.4L7.8 7L9 5.4" fill="#7a7a7a"/></svg>
<div class="r" style="left:1257.2px;top:590.4px;width:19.2px;height:14.6px;background:#2d2d2d;border-radius:2px;"></div>
<svg class="r" style="left:1262px;top:593px" width="10" height="9.5" viewBox="0 0 10 9.5"><path d="M1.6 9V4.6a3.4 3.4 0 0 1 6.8 0V9" fill="none" stroke="#bdbdbd" stroke-width="2.4"/><path d="M0.4 7.4h2.4M7.2 7.4h2.4" stroke="#2d2d2d" stroke-width="0.7"/></svg>
<svg class="r" style="left:1263px;top:610.5px" width="8" height="11" viewBox="0 0 8 11"><path d="M6.4 1C2.4 0.8 1 3.6 3.8 5.2C6.8 6.8 5.6 10 1.4 10" fill="none" stroke="#767676" stroke-width="1"/></svg>
<svg class="r" style="left:1263px;top:629px" width="8" height="11" viewBox="0 0 8 11"><path d="M2 0.6V5.2H5.6V10.4" fill="none" stroke="#6a6a6a" stroke-width="1" /><path d="M2 3.4L3 5.6" stroke="#6a6a6a" stroke-width="0.8"/></svg>
<div class="r" style="left:361px;top:176px;width:558px;height:335px;background:#535353;border:1px solid #9ac4ee;box-shadow:0 4px 8px rgba(0,0,0,0.20),inset 0 -0.6px 0 0 #35608f;"></div>
<div class="r" style="left:362px;top:177px;width:556px;height:20.2px;background:#3e8fdc;"></div>
<div class="r" style="left:362px;top:177px;width:556px;height:0.8px;background:#3a7fc6;"></div>
<div class="t" style="left:367.2px;top:180.2px;color:#0c1c30;font-size:9px;transform:scaleX(0.8708);">Создать из шаблона</div>
<svg class="r" style="left:904px;top:183px" width="9" height="9" viewBox="0 0 9 9"><path d="M0.8 0.8L8.2 8.2M8.2 0.8L0.8 8.2" stroke="#102030" stroke-width="1.1"/></svg>
<div class="r" style="left:370.5px;top:207px;width:540px;height:265.3px;background:transparent;border:1px solid #4b4b4b;"></div>
<div class="t" style="left:377.7px;top:210.0px;color:#f0f0f0;font-size:9px;transform:scaleX(0.8188);">Шаблоны</div>
<div class="r" style="left:378px;top:223px;width:34px;height:1.6px;background:#4d80bd;"></div>
<div class="t" style="left:375.7px;top:231.6px;color:#c4c4c4;font-size:9px;transform:scaleX(0.8726);">Категория:</div>
<div class="t" style="left:515.7px;top:231.6px;color:#c4c4c4;font-size:9px;transform:scaleX(0.8295);">Шаблоны:</div>
<div class="t" style="left:688.3px;top:231.6px;color:#c4c4c4;font-size:9px;transform:scaleX(0.8828);">Просмотр:</div>
<div class="r" style="left:375px;top:250px;width:134.3px;height:221.5px;background:#535353;border:1px solid #5a8fd0;border-radius:2px;"></div>
<div class="r" style="left:376px;top:251px;width:132.3px;height:11.8px;background:#4a6890;"></div>
<div class="t" style="left:379.0px;top:250.2px;color:#e6e6e6;font-size:9px;transform:scaleX(0.8000);">Анимация</div>
<div class="t" style="left:379.0px;top:262.9px;color:#e6e6e6;font-size:9px;transform:scaleX(0.8355);">Баннеры</div>
<div class="t" style="left:379.0px;top:275.6px;color:#e6e6e6;font-size:9px;transform:scaleX(0.8318);">Воспроизведение</div>
<div class="t" style="left:379.0px;top:288.3px;color:#e6e6e6;font-size:9px;transform:scaleX(0.8106);">Образцы файлов</div>
<div class="t" style="left:379.0px;top:301.0px;color:#e6e6e6;font-size:9px;transform:scaleX(0.8179);">Презентации</div>
<div class="t" style="left:379.0px;top:313.6px;color:#e6e6e6;font-size:9px;transform:scaleX(0.8059);">Реклама</div>
<div class="t" style="left:379.0px;top:326.3px;color:#e6e6e6;font-size:9px;transform:scaleX(0.8782);">AIR for Android</div>
<div class="t" style="left:379.0px;top:339.0px;color:#e6e6e6;font-size:9px;transform:scaleX(0.8481);">AIR for iOS</div>
<div class="t" style="left:379.0px;top:351.7px;color:#e6e6e6;font-size:9px;transform:scaleX(0.8092);">HTML5 Canvas</div>
<div class="r" style="left:516px;top:250px;width:166px;height:221.5px;background:#535353;border:1px solid #4a4a4a;"></div>
<div class="r" style="left:517px;top:251px;width:164.6px;height:11.8px;background:#4a6890;"></div>
<svg class="r" style="left:519.8px;top:252px" width="8.4" height="10.4" viewBox="0 0 8.4 10.4"><path d="M0.6 0.6H6L7.8 2.4V9.8H0.6z" fill="#330803" stroke="#c6432c" stroke-width="1"/><path d="M2 6.6L3.2 2.6H4L5 6.6M2.6 5.2H4.4M5.4 6.6V4.2C5.8 3.6 6.6 3.8 6.6 4.6V6.6" fill="none" stroke="#d23a22" stroke-width="1"/></svg>
<div class="t" style="left:533.0px;top:250.2px;color:#e6e6e6;font-size:9px;transform:scaleX(0.8375);">Аним. кнопка, подсветка</div>
<svg class="r" style="left:519.8px;top:264.69px" width="8.4" height="10.4" viewBox="0 0 8.4 10.4"><path d="M0.6 0.6H6L7.8 2.4V9.8H0.6z" fill="#330803" stroke="#c6432c" stroke-width="1"/><path d="M2 6.6L3.2 2.6H4L5 6.6M2.6 5.2H4.4M5.4 6.6V4.2C5.8 3.6 6.6 3.8 6.6 4.6V6.6" fill="none" stroke="#d23a22" stroke-width="1"/></svg>
<div class="t" style="left:533.0px;top:262.9px;color:#e6e6e6;font-size:9px;transform:scaleX(0.8348);">Аним.кнопка, свечение текста</div>
<svg class="r" style="left:519.8px;top:277.38px" width="8.4" height="10.4" viewBox="0 0 8.4 10.4"><path d="M0.6 0.6H6L7.8 2.4V9.8H0.6z" fill="#330803" stroke="#c6432c" stroke-width="1"/><path d="M2 6.6L3.2 2.6H4L5 6.6M2.6 5.2H4.4M5.4 6.6V4.2C5.8 3.6 6.6 3.8 6.6 4.6V6.6" fill="none" stroke="#d23a22" stroke-width="1"/></svg>
<div class="t" style="left:533.0px;top:275.6px;color:#e6e6e6;font-size:9px;transform:scaleX(0.8087);">Аним.маска, анимация движения</div>
<svg class="r" style="left:519.8px;top:290.07px" width="8.4" height="10.4" viewBox="0 0 8.4 10.4"><path d="M0.6 0.6H6L7.8 2.4V9.8H0.6z" fill="#330803" stroke="#c6432c" stroke-width="1"/><path d="M2 6.6L3.2 2.6H4L5 6.6M2.6 5.2H4.4M5.4 6.6V4.2C5.8 3.6 6.6 3.8 6.6 4.6V6.6" fill="none" stroke="#d23a22" stroke-width="1"/></svg>
<div class="t" style="left:533.0px;top:288.3px;color:#e6e6e6;font-size:9px;transform:scaleX(0.8071);">Аним.маска, анимация формы</div>
<svg class="r" style="left:519.8px;top:302.76px" width="8.4" height="10.4" viewBox="0 0 8.4 10.4"><path d="M0.6 0.6H6L7.8 2.4V9.8H0.6z" fill="#330803" stroke="#c6432c" stroke-width="1"/><path d="M2 6.6L3.2 2.6H4L5 6.6M2.6 5.2H4.4M5.4 6.6V4.2C5.8 3.6 6.6 3.8 6.6 4.6V6.6" fill="none" stroke="#d23a22" stroke-width="1"/></svg>
<div class="t" style="left:533.0px;top:301.0px;color:#e6e6e6;font-size:9px;transform:scaleX(0.8389);">Случайное движение, броуновское</div>
<svg class="r" style="left:519.8px;top:315.45px" width="8.4" height="10.4" viewBox="0 0 8.4 10.4"><path d="M0.6 0.6H6L7.8 2.4V9.8H0.6z" fill="#330803" stroke="#c6432c" stroke-width="1"/><path d="M2 6.6L3.2 2.6H4L5 6.6M2.6 5.2H4.4M5.4 6.6V4.2C5.8 3.6 6.6 3.8 6.6 4.6V6.6" fill="none" stroke="#d23a22" stroke-width="1"/></svg>
<div class="t" style="left:533.0px;top:313.6px;color:#e6e6e6;font-size:9px;transform:scaleX(0.8344);">Случайное движение, органическое</div>
<svg class="r" style="left:519.8px;top:328.14px" width="8.4" height="10.4" viewBox="0 0 8.4 10.4"><path d="M0.6 0.6H6L7.8 2.4V9.8H0.6z" fill="#330803" stroke="#c6432c" stroke-width="1"/><path d="M2 6.6L3.2 2.6H4L5 6.6M2.6 5.2H4.4M5.4 6.6V4.2C5.8 3.6 6.6 3.8 6.6 4.6V6.6" fill="none" stroke="#d23a22" stroke-width="1"/></svg>
<div class="t" style="left:533.0px;top:326.3px;color:#e6e6e6;font-size:9px;transform:scaleX(0.8196);">Сценарий, дождь</div>
<svg class="r" style="left:519.8px;top:340.83px" width="8.4" height="10.4" viewBox="0 0 8.4 10.4"><path d="M0.6 0.6H6L7.8 2.4V9.8H0.6z" fill="#330803" stroke="#c6432c" stroke-width="1"/><path d="M2 6.6L3.2 2.6H4L5 6.6M2.6 5.2H4.4M5.4 6.6V4.2C5.8 3.6 6.6 3.8 6.6 4.6V6.6" fill="none" stroke="#d23a22" stroke-width="1"/></svg>
<div class="t" style="left:533.0px;top:339.0px;color:#e6e6e6;font-size:9px;transform:scaleX(0.8095);">Сценарий, снег</div>
<div class="r" style="left:688.6px;top:250.4px;width:133.6px;height:101.8px;background:#2d2d2d;border:1px solid #0a0a0a;border-top-width:1.5px;border-bottom-width:1.5px;"></div>
<div class="r" style="left:689.6px;top:318px;width:131.6px;height:33px;background-image:linear-gradient(rgba(70,70,70,0.4) 0.6px,transparent 0.6px),linear-gradient(90deg,rgba(70,70,70,0.4) 0.6px,transparent 0.6px);background-size:2px 2px;-webkit-mask-image:linear-gradient(transparent,#000 70%);mask-image:linear-gradient(transparent,#000 70%);"></div>
<div class="r" style="left:737.9px;top:292.7px;width:38px;height:11.4px;border-radius:5.8px;background:linear-gradient(#f6f6f6 0%,#c4c4c4 22%,#d2d2d2 60%,#f2f2f2 100%);box-shadow:0 0 1.5px 0.6px rgba(0,0,0,0.75);"></div>
<div class="t" style="left:751.7px;top:292.7px;color:#3a3a3a;font-size:4.1px;transform:scaleX(1.0361);">НАЖМИ</div>
<div class="t" style="left:689.3px;top:358.0px;color:#c4c4c4;font-size:9px;transform:scaleX(0.7969);">Описание:</div>
<div class="r" style="left:689.6px;top:378.4px;width:121px;height:92.4px;background:#454545;"></div>
<div class="r" style="left:810.3px;top:378.4px;width:11px;height:92.4px;background:#f0f0f0;"></div>
<svg class="r" style="left:812.3px;top:382px" width="7" height="5" viewBox="0 0 7 5"><path d="M0.8 4L3.5 1.2L6.2 4" fill="none" stroke="#c4c4c4" stroke-width="1"/></svg>
<svg class="r" style="left:812.3px;top:462.5px" width="7" height="5" viewBox="0 0 7 5"><path d="M0.8 1L3.5 3.8L6.2 1" fill="none" stroke="#a8a8a8" stroke-width="1"/></svg>
<div class="t" style="left:691.7px;top:376.3px;color:#f0f0f0;font-size:9px;transform:scaleX(0.8322);">Кнопка с подсветкой на основе</div>
<div class="t" style="left:691.7px;top:385.0px;color:#f0f0f0;font-size:9px;transform:scaleX(0.8297);">фрагмента ролика. Включает в</div>
<div class="t" style="left:691.7px;top:393.7px;color:#f0f0f0;font-size:9px;transform:scaleX(0.8084);">себя состояние &quot;просмотрено&quot;.</div>
<div class="r" style="left:782px;top:480px;width:61.5px;height:17px;background:#535353;border:1.3px solid #f4f4f4;border-radius:8.5px;"></div>
<div class="t" style="left:807.7px;top:481.7px;color:#f0f0f0;font-size:9px;font-weight:bold;transform:scaleX(0.7111);">OK</div>
<div class="r" style="left:850px;top:480px;width:61.7px;height:17px;background:#535353;border:1px solid #c8c8c8;border-radius:8.5px;"></div>
<div class="t" style="left:867.2px;top:481.7px;color:#f0f0f0;font-size:9px;font-weight:bold;transform:scaleX(0.7638);">Отмена</div>
</body></html>
